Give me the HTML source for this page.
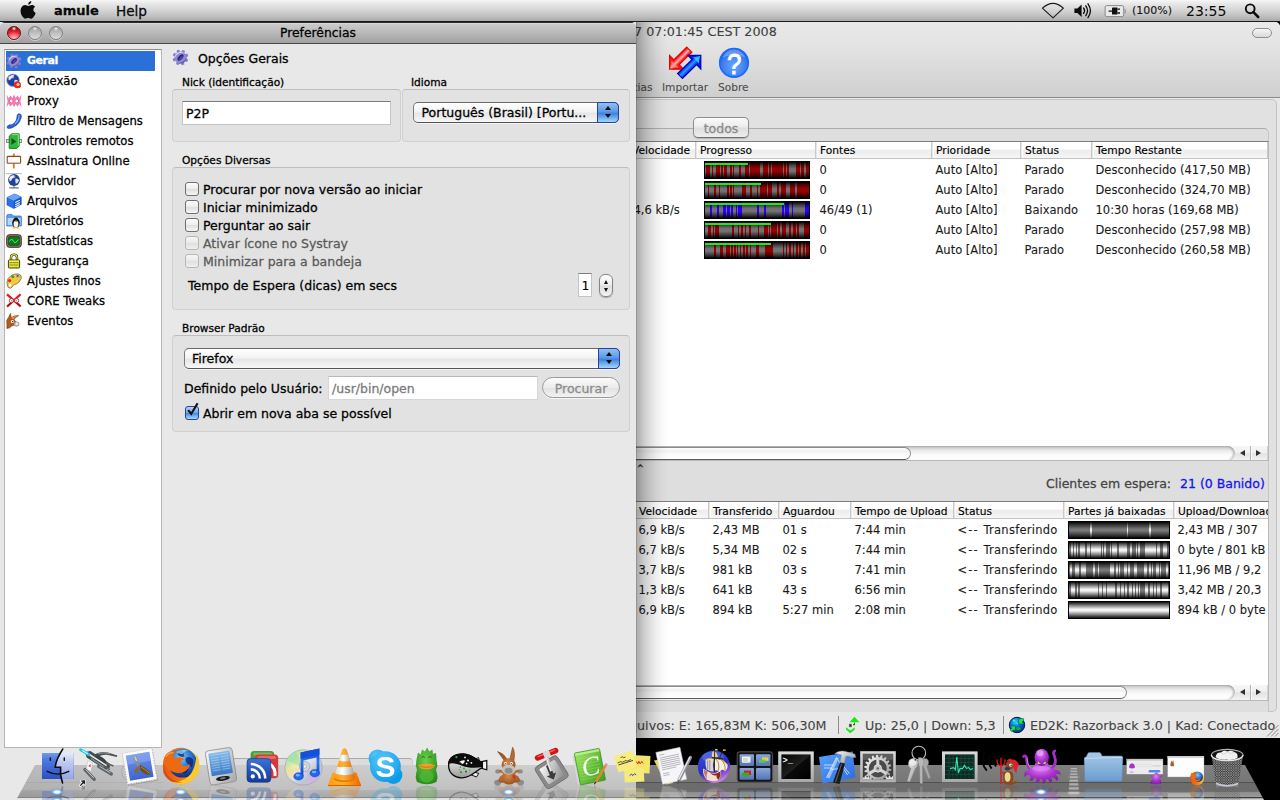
<!DOCTYPE html>
<html lang="pt-BR">
<head>
<meta charset="utf-8">
<title>Preferências</title>
<style>
*{box-sizing:border-box;margin:0;padding:0}
html,body{width:1280px;height:800px;overflow:hidden;background:#000}
body{position:relative;font-family:"DejaVu Sans","Liberation Sans",sans-serif;font-size:12.5px;color:#000;-webkit-font-smoothing:antialiased;-webkit-text-stroke:.28px}
.abs{position:absolute}
.t{position:absolute;white-space:nowrap;line-height:1}
/* ---------- menu bar ---------- */
#menubar{position:absolute;left:0;top:0;width:1280px;height:22px;background:linear-gradient(#f6f6f6 0,#e6e6e6 20%,#d4d4d4 50%,#bdbdbd 80%,#a9a9a9 100%);border-bottom:1px solid #1c1c1c;z-index:50}
/* ---------- main window ---------- */
#main{position:absolute;left:560px;top:22px;width:720px;height:716px;background:#e8e8e8;overflow:hidden;border-radius:0 5px 0 0}
#mtool{position:absolute;left:0;top:0;width:720px;height:76px;background:linear-gradient(#e9e9e9 0,#e4e4e4 30%,#cfcfcf 100%);border-bottom:1px solid #8a8a8a}
/* ---------- preferences window ---------- */
#pref{position:absolute;left:0;top:22px;width:636px;height:778px;background:#e8e8e8;z-index:10}
#ptitle{position:absolute;left:0;top:0;width:636px;height:22px;background:linear-gradient(#2a2a2a 0,#2a2a2a .6px,#e6e6e6 1px,#cbcbcb 2px,#b9b9b9 50%,#a0a0a0 100%);border-bottom:1px solid #484848;border-radius:5px 5px 0 0}
.gb{position:absolute;background:#e2e2e2;border:1px solid #d0d0d0;border-top-color:#bdbdbd;border-radius:4px}
.lbl{font-size:10.6px}
.cb{position:absolute;width:14px;height:14px;border:1px solid #6f6f6f;border-radius:3px;background:linear-gradient(#fdfdfd 0,#ececec 50%,#dedede 51%,#f6f6f6 100%)}
.cb.dis{border-color:#a9a9a9;opacity:.75}
.popup{position:absolute;height:21px;border:1px solid #7b7b7b;border-top-color:#6a6a6a;border-bottom-color:#555;border-radius:5px;background:linear-gradient(#ffffff 0,#f3f3f3 45%,#e6e6e6 55%,#f7f7f7 100%);box-shadow:0 1px 0 rgba(255,255,255,.6)}
.popup .cap{position:absolute;right:-1px;top:-1px;width:22px;height:21px;border:1px solid #2a3e9a;border-radius:0 5px 5px 0;background:linear-gradient(#8fc0f5 0,#5a9be6 45%,#3f83dd 55%,#9fd8fb 100%)}
.tf{position:absolute;background:#fff;border:1px solid #c4c4c4;border-top-color:#7d7d7d}

.f13{font-size:12.5px;line-height:16px;transform:translateY(.5px)}
.lbl{line-height:14px}
.g{color:#5a5a5a}
.tl{position:absolute;top:4px;width:14px;height:14px;border-radius:50%;border:1px solid #808080;background:radial-gradient(circle at 50% 14%,#ededed 0,rgba(237,237,237,0) 22%),linear-gradient(#9a9a9a 0,#bcbcbc 45%,#dcdcdc 100%);box-shadow:0 1px 0 rgba(255,255,255,.45)}
#plist{position:absolute;left:4px;top:27px;width:158px;height:699px;background:#fff;border:1px solid #b5b5b5;border-top-color:#8e8e8e}
.li{position:absolute;left:1px;width:149px;height:20px}
.li span{position:absolute;left:21px;top:2px;font-size:11.6px;line-height:16px;white-space:nowrap}
.li.sel{background:#2b6fd9;color:#fff}
.li.sel span{font-weight:bold;font-size:11px;letter-spacing:-.45px}
.ic{position:absolute;left:0;top:2px;width:16px;height:16px}.ic svg{display:block}
.step{position:absolute;width:14px;height:23px;border:1px solid #858585;border-radius:6px;background:linear-gradient(#fff 0,#ececec 48%,#dcdcdc 52%,#f4f4f4 100%);box-shadow:0 1px 1px rgba(0,0,0,.25)}
.step .up{position:absolute;left:3.5px;top:4.5px;border:2.5px solid transparent;border-top:0;border-bottom:4px solid #111}
.step .dn{position:absolute;left:3.5px;top:12.5px;border:2.5px solid transparent;border-bottom:0;border-top:4px solid #111}
.btn{position:absolute;height:21px;border:1px solid #9a9a9a;border-radius:11px;background:linear-gradient(#fbfbfb 0,#ececec 50%,#e2e2e2 51%,#f2f2f2 100%);box-shadow:0 1px 0 rgba(255,255,255,.7)}
.tf.dis{border-color:#d6d6d6;border-top-color:#b9b9b9}
.cb.on{border-color:#2a3f96;background:linear-gradient(#b9d7f8 0,#6aa6ea 48%,#4489df 52%,#a5dcfb 100%)}
.chk{position:absolute;left:-1px;top:-4px;overflow:visible}
.cap:before{content:"";position:absolute;left:6.5px;top:2.6px;border:3px solid transparent;border-top:0;border-bottom:4.4px solid #0a0a0a}
.cap:after{content:"";position:absolute;left:6.5px;top:10.7px;border:3px solid transparent;border-bottom:0;border-top:4.4px solid #0a0a0a}

#obox{position:absolute;left:-20px;top:77px;width:736.5px;height:613px;background:#e1e1e1;border:1px solid #c2c2c2;border-top-color:#c6c6c6;border-radius:5px}
#obox>*{margin-left:19px;margin-top:-78px}
#tpane{position:absolute;left:-20px;top:105.5px;width:728.5px;height:590px;background:#dedede;border:1px solid #c6c6c6;border-top-color:#adadad;border-radius:5px}
#tabbtn{position:absolute;left:133px;top:95px;width:56px;height:21px;border:1px solid #8e8e8e;border-bottom-color:#6e6e6e;border-radius:5px;background:linear-gradient(#fafafa 0,#ececec 48%,#dedede 52%,#ededed 100%);box-shadow:0 1px 1px rgba(0,0,0,.18)}
.tbl{position:absolute;background:#fff;border:1px solid #b9b9b9;border-top-color:#7e7e7e;overflow:hidden}
.th{position:absolute;left:0;top:0;right:0;height:17px;background:linear-gradient(#fff 0,#fff 40%,#ececec 55%,#f7f7f7 100%);border-bottom:1px solid #c2c2c2}
.h11{font-size:10.7px;line-height:14px;color:#000;-webkit-text-stroke:.12px;margin-left:-1px}
.c12{font-size:11.5px;line-height:16px;color:#1a1a1a;-webkit-text-stroke:.1px;margin-left:-1.5px}
.th2 .h11{margin-top:1px}
.sep{position:absolute;margin-left:-1.5px;top:0;width:2px;height:16px;border-left:1px solid #c9c9c9;border-right:1px solid #fdfdfd;background:#e6e6e6;width:3px}
.pbar,.qbar{position:absolute;width:106px;height:18px;background:#000}
.qbar{width:102px}
#sbar{position:absolute;left:0;top:690px;width:720px;height:26px;background:#e8e8e8}
.sg{color:#444;font-size:12.7px;-webkit-text-stroke:.1px}
.vsep{position:absolute;top:4px;width:1px;height:18px;background:#8e8e8e}

#pshadow{position:absolute;left:636px;top:22px;width:34px;height:778px;z-index:11;background:linear-gradient(90deg,rgba(0,0,0,.5) 0,rgba(0,0,0,.32) 1px,rgba(0,0,0,.2) 8px,rgba(0,0,0,.125) 14px,rgba(0,0,0,.065) 20px,rgba(0,0,0,.025) 26px,rgba(0,0,0,0) 33px)}
.hsb{position:absolute;left:0;width:705.5px;height:15px;background:linear-gradient(#f7f7f7 0,#efefef 45%,#e3e3e3 52%,#f3f3f3 100%);box-shadow:0 1px 0 #fff,1px 0 0 #d2d2d2}
.hsb .track{position:absolute;left:-10px;top:0;height:15px;border-radius:0 7.5px 7.5px 0;background:linear-gradient(#b4b4b4 0,#d2d2d2 12%,#ececec 32%,#fbfbfb 60%,#fff 100%);box-shadow:inset -2px 0 2px rgba(0,0,0,.22)}
.hsb .thumb{position:absolute;top:.5px;height:13.5px;border:1px solid #8a8a8a;border-bottom-color:#5c5c5c;border-radius:7px;background:linear-gradient(#fff 0,#f0f0f0 30%,#fafafa 50%,#fff 100%)}
.hsb .arL{position:absolute;top:4px;border:3.5px solid transparent;border-left:0;border-right:5.5px solid #2e2e2e}
.hsb .arR{position:absolute;top:4px;border:3.5px solid transparent;border-right:0;border-left:5.5px solid #2e2e2e}
.hsb .vs{position:absolute;top:0;width:1px;height:15px;background:#b4b4b4;box-shadow:1px 0 0 #fafafa}
.pbar b,.qbar b{position:absolute;left:1px;top:1px;right:1px;bottom:1px}
.pbar b:after,.qbar b:after{content:"";position:absolute;left:0;top:0;right:0;bottom:0;background:linear-gradient(rgba(0,0,0,.95) 0,rgba(0,0,0,.45) 18%,rgba(0,0,0,0) 42%,rgba(0,0,0,0) 58%,rgba(0,0,0,.5) 82%,rgba(0,0,0,.95) 100%)}
.qbar b:after{background:linear-gradient(rgba(0,0,0,.95) 0,rgba(0,0,0,.55) 18%,rgba(0,0,0,0) 45%,rgba(0,0,0,0) 55%,rgba(0,0,0,.55) 82%,rgba(0,0,0,.95) 100%)}
.pbar u{position:absolute;left:1px;top:2px;height:2px;background:#14f014}
#pb0 b{background:linear-gradient(90deg,#727272 0.0px 1.3px,#960000 1.3px 5.5px,#727272 5.5px 7.2px,#960000 7.2px 8.1px,#727272 8.1px 10.7px,#960000 10.7px 15.0px,#727272 15.0px 16.3px,#960000 16.3px 17.6px,#727272 17.6px 18.9px,#960000 18.9px 22.2px,#727272 22.2px 25.0px,#960000 25.0px 26.7px,#727272 26.7px 27.6px,#960000 27.6px 28.9px,#727272 28.9px 33.9px,#960000 33.9px 35.9px,#727272 35.9px 39.8px,#960000 39.8px 44.1px,#727272 44.1px 45.0px,#960000 45.0px 54.8px,#727272 54.8px 58.0px,#960000 58.0px 63.2px,#727272 63.2px 64.5px,#960000 64.5px 66.2px,#727272 66.2px 67.3px,#960000 67.3px 78.2px,#727272 78.2px 79.5px,#960000 79.5px 80.8px,#727272 80.8px 81.9px,#960000 81.9px 84.1px,#727272 84.1px 91.0px,#960000 91.0px 95.2px,#727272 95.2px 96.5px,#960000 96.5px 99.1px,#727272 99.1px 100.7px,#960000 100.7px 103.7px,#727272 103.7px 104.0px)}#pb0 u{width:42.8px}
#pb1 b{background:linear-gradient(90deg,#727272 0.0px 2.6px,#960000 2.6px 3.9px,#727272 3.9px 9.1px,#960000 9.1px 10.7px,#727272 10.7px 13.7px,#960000 13.7px 15.0px,#727272 15.0px 22.2px,#960000 22.2px 23.7px,#727272 23.7px 25.4px,#960000 25.4px 26.7px,#727272 26.7px 28.0px,#960000 28.0px 28.9px,#727272 28.9px 36.8px,#960000 36.8px 41.1px,#727272 41.1px 45.0px,#960000 45.0px 46.9px,#727272 46.9px 52.2px,#960000 52.2px 53.5px,#727272 53.5px 54.8px,#960000 54.8px 61.9px,#727272 61.9px 63.2px,#960000 63.2px 67.5px,#727272 67.5px 71.7px,#960000 71.7px 73.7px,#727272 73.7px 75.6px,#960000 75.6px 81.5px,#727272 81.5px 85.4px,#960000 85.4px 89.7px,#727272 89.7px 91.9px,#960000 91.9px 103.7px,#727272 103.7px 104.0px)}#pb1 u{width:55.8px}
#pb2 b{background:linear-gradient(90deg,#727272 0.0px 5.0px,#2800ff 5.0px 6.8px,#727272 6.8px 11.7px,#2800ff 11.7px 13.7px,#727272 13.7px 18.0px,#2800ff 18.0px 20.9px,#727272 20.9px 21.9px,#2800ff 21.9px 24.8px,#727272 24.8px 26.1px,#2800ff 26.1px 27.6px,#727272 27.6px 30.6px,#2800ff 30.6px 31.9px,#727272 31.9px 32.9px,#2800ff 32.9px 34.6px,#727272 34.6px 35.5px,#2800ff 35.5px 37.2px,#727272 37.2px 51.9px,#2800ff 51.9px 54.1px,#727272 54.1px 58.9px,#2800ff 58.9px 61.0px,#727272 61.0px 76.9px,#2800ff 76.9px 78.9px,#727272 78.9px 80.2px,#2800ff 80.2px 84.1px,#727272 84.1px 86.7px,#2800ff 86.7px 88.4px,#727272 88.4px 100.1px,#2800ff 100.1px 101.7px,#727272 101.7px 102.3px,#2800ff 102.3px 103.7px,#727272 103.7px 104.0px)}#pb2 u{width:78.9px}
#pb3 b{background:linear-gradient(90deg,#727272 0.0px 2.6px,#960000 2.6px 6.5px,#727272 6.5px 7.8px,#960000 7.8px 9.1px,#727272 9.1px 10.2px,#960000 10.2px 13.7px,#727272 13.7px 27.4px,#960000 27.4px 28.9px,#727272 28.9px 32.6px,#960000 32.6px 33.9px,#727272 33.9px 36.2px,#960000 36.2px 37.8px,#727272 37.8px 39.8px,#960000 39.8px 41.1px,#727272 41.1px 44.3px,#960000 44.3px 45.9px,#727272 45.9px 52.8px,#960000 52.8px 54.1px,#727272 54.1px 59.3px,#960000 59.3px 62.6px,#727272 62.6px 63.6px,#960000 63.6px 65.2px,#727272 65.2px 66.2px,#960000 66.2px 71.7px,#727272 71.7px 73.0px,#960000 73.0px 74.6px,#727272 74.6px 77.2px,#960000 77.2px 81.5px,#727272 81.5px 84.1px,#960000 84.1px 86.0px,#727272 86.0px 87.6px,#960000 87.6px 90.6px,#727272 90.6px 91.9px,#960000 91.9px 93.9px,#727272 93.9px 99.1px,#960000 99.1px 103.7px,#727272 103.7px 104.0px)}#pb3 u{width:65.8px}
#pb4 b{background:linear-gradient(90deg,#727272 0.0px 9.4px,#960000 9.4px 11.1px,#727272 11.1px 15.0px,#960000 15.0px 18.0px,#727272 18.0px 20.9px,#960000 20.9px 24.8px,#727272 24.8px 26.1px,#960000 26.1px 28.0px,#727272 28.0px 29.3px,#960000 29.3px 30.6px,#727272 30.6px 31.9px,#960000 31.9px 33.2px,#727272 33.2px 34.6px,#960000 34.6px 36.2px,#727272 36.2px 37.8px,#960000 37.8px 39.8px,#727272 39.8px 41.1px,#960000 41.1px 42.8px,#727272 42.8px 45.0px,#960000 45.0px 46.3px,#727272 46.3px 51.1px,#960000 51.1px 54.1px,#727272 54.1px 59.7px,#960000 59.7px 67.8px,#727272 67.8px 77.6px,#960000 77.6px 79.3px,#727272 79.3px 80.8px,#960000 80.8px 82.4px,#727272 82.4px 84.1px,#960000 84.1px 86.0px,#727272 86.0px 87.6px,#960000 87.6px 89.3px,#727272 89.3px 91.0px,#960000 91.0px 92.6px,#727272 92.6px 94.1px,#960000 94.1px 95.8px,#727272 95.8px 97.8px,#960000 97.8px 99.7px,#727272 99.7px 101.0px,#960000 101.0px 103.7px,#727272 103.7px 104.0px)}#pb4 u{width:65.8px}
#qb0 b{background:linear-gradient(90deg,#787878 0.0px 20.9px,#f4f4f4 20.9px 23.5px,#787878 23.5px 57.8px,#f4f4f4 57.8px 58.9px,#787878 58.9px 80.2px,#f4f4f4 80.2px 81.9px,#787878 81.9px 100.0px)}
#qb1 b{background:linear-gradient(90deg,#787878 0.0px 2.0px,#f4f4f4 2.0px 3.9px,#787878 3.9px 5.0px,#f4f4f4 5.0px 6.8px,#787878 6.8px 7.6px,#f4f4f4 7.6px 8.9px,#787878 8.9px 10.7px,#f4f4f4 10.7px 15.6px,#787878 15.6px 18.3px,#f4f4f4 18.3px 20.9px,#787878 20.9px 22.2px,#f4f4f4 22.2px 31.9px,#787878 31.9px 32.9px,#f4f4f4 32.9px 33.9px,#787878 33.9px 34.9px,#f4f4f4 34.9px 36.8px,#787878 36.8px 40.7px,#f4f4f4 40.7px 42.0px,#787878 42.0px 43.3px,#f4f4f4 43.3px 48.5px,#787878 48.5px 50.2px,#f4f4f4 50.2px 58.0px,#787878 58.0px 61.5px,#f4f4f4 61.5px 62.8px,#787878 62.8px 66.8px,#f4f4f4 66.8px 68.4px,#787878 68.4px 69.4px,#f4f4f4 69.4px 71.1px,#787878 71.1px 75.9px,#f4f4f4 75.9px 86.7px,#787878 86.7px 88.0px,#f4f4f4 88.0px 91.0px,#787878 91.0px 94.5px,#f4f4f4 94.5px 97.8px,#787878 97.8px 100.0px)}
#qb2 b{background:linear-gradient(90deg,#787878 0.0px 0.7px,#f4f4f4 0.7px 2.6px,#787878 2.6px 6.3px,#f4f4f4 6.3px 10.2px,#787878 10.2px 11.7px,#f4f4f4 11.7px 16.9px,#787878 16.9px 23.7px,#f4f4f4 23.7px 26.1px,#787878 26.1px 28.7px,#f4f4f4 28.7px 30.0px,#787878 30.0px 41.1px,#f4f4f4 41.1px 45.0px,#787878 45.0px 46.9px,#f4f4f4 46.9px 48.9px,#787878 48.9px 49.8px,#f4f4f4 49.8px 51.5px,#787878 51.5px 55.0px,#f4f4f4 55.0px 58.0px,#787878 58.0px 58.9px,#f4f4f4 58.9px 60.6px,#787878 60.6px 65.2px,#f4f4f4 65.2px 68.4px,#787878 68.4px 74.6px,#f4f4f4 74.6px 77.6px,#787878 77.6px 79.8px,#f4f4f4 79.8px 81.9px,#787878 81.9px 82.8px,#f4f4f4 82.8px 84.1px,#787878 84.1px 86.7px,#f4f4f4 86.7px 89.7px,#787878 89.7px 91.0px,#f4f4f4 91.0px 92.3px,#787878 92.3px 97.1px,#f4f4f4 97.1px 99.1px,#787878 99.1px 100.0px)}
#qb3 b{background:linear-gradient(90deg,#787878 0.0px 2.0px,#f4f4f4 2.0px 6.5px,#787878 6.5px 7.6px,#f4f4f4 7.6px 8.9px,#787878 8.9px 10.7px,#f4f4f4 10.7px 28.7px,#787878 28.7px 30.0px,#f4f4f4 30.0px 32.6px,#787878 32.6px 33.9px,#f4f4f4 33.9px 36.8px,#787878 36.8px 38.1px,#f4f4f4 38.1px 45.9px,#787878 45.9px 47.6px,#f4f4f4 47.6px 50.6px,#787878 50.6px 52.2px,#f4f4f4 52.2px 55.0px,#787878 55.0px 56.3px,#f4f4f4 56.3px 58.0px,#787878 58.0px 60.2px,#f4f4f4 60.2px 62.8px,#787878 62.8px 64.1px,#f4f4f4 64.1px 66.2px,#787878 66.2px 67.1px,#f4f4f4 67.1px 68.8px,#787878 68.8px 69.8px,#f4f4f4 69.8px 71.1px,#787878 71.1px 75.9px,#f4f4f4 75.9px 79.5px,#787878 79.5px 81.5px,#f4f4f4 81.5px 84.1px,#787878 84.1px 85.4px,#f4f4f4 85.4px 87.4px,#787878 87.4px 88.4px,#f4f4f4 88.4px 91.0px,#787878 91.0px 93.2px,#f4f4f4 93.2px 99.1px,#787878 99.1px 100.0px)}
#qb4 b{background:linear-gradient(90deg,#f4f4f4 0.0px 100.0px)}
</style>
</head>
<body>

<!-- ================= MAIN WINDOW (behind) ================= -->
<div id="main">
  <div id="mtool">
    <span class="t" style="left:74px;top:2px;font-size:12.75px;line-height:16px;color:#3f3f3f;-webkit-text-stroke:.1px">7 07:01:45 CEST 2008</span>
    <i class="abs" style="left:692px;top:6px;width:20px;height:10px;border:1px solid #8f8f8f;border-radius:5px;background:linear-gradient(#f6f6f6,#d8d8d8)"></i>
    <span class="t lbl" style="right:627.5px;top:58px;color:#4c4c4c;-webkit-text-stroke:.1px">Notícias</span>
    <span class="t lbl" style="left:102px;top:58px;color:#4c4c4c;-webkit-text-stroke:.1px">Importar</span>
    <span class="t lbl" style="left:158px;top:58px;color:#4c4c4c;-webkit-text-stroke:.1px">Sobre</span>
    <svg class="abs" style="left:100px;top:20px" width="50" height="40" viewBox="660 42 50 40">
      <defs><linearGradient id="gr" x1="0" y1="0" x2="1" y2="1"><stop offset="0" stop-color="#f00000"/><stop offset=".42" stop-color="#ff2020"/><stop offset=".5" stop-color="#ffb0b0"/><stop offset=".58" stop-color="#ff2020"/><stop offset="1" stop-color="#f00000"/></linearGradient>
      <linearGradient id="gbl" x1="0" y1="0" x2="1" y2="1"><stop offset="0" stop-color="#0000c8"/><stop offset=".4" stop-color="#0a20f0"/><stop offset=".5" stop-color="#2a9aff"/><stop offset=".6" stop-color="#0a20f0"/><stop offset="1" stop-color="#0000c0"/></linearGradient></defs>
      <path d="M686.8 47.2 L691.8 52.2 L679.2 64.6 L683.4 69.2 L669.6 69.2 L669.6 55.4 L674 59.8 Z" fill="url(#gr)" stroke="#e80000" stroke-width="1.2" stroke-linejoin="miter"/>
      <path d="M671.4 67.4 L671.4 60.4 L678.4 67.4 Z" fill="#ff9a9a" opacity=".7"/>
      <path d="M682.4 78.4 L677.6 73.6 L692 59.6 L688 55.4 L700.8 55.4 L700.8 69 L696.6 64.6 Z" fill="url(#gbl)" stroke="#0000b0" stroke-width="1.2" stroke-linejoin="miter"/>
      <path d="M699 57.2 L693 57.2 L699 63.4 Z" fill="#30c8ff" opacity=".9"/>
    </svg>
    <svg class="abs" style="left:157px;top:24px" width="34" height="34" viewBox="717 46 34 34">
      <defs><radialGradient id="gq" cx=".5" cy=".62" r=".62"><stop offset="0" stop-color="#6aa8ff"/><stop offset=".7" stop-color="#3a7af0"/><stop offset="1" stop-color="#1a56e0"/></radialGradient></defs>
      <circle cx="734" cy="62.8" r="14.3" fill="url(#gq)" stroke="#176aff" stroke-width="1.6"/>
      <path d="M722.6 57.6 A12 12 0 0 1 745.4 57.6 A16 9 0 0 0 722.6 57.6 Z" fill="#fff" opacity=".28"/>
      <text x="0" y="0" transform="translate(734.3 73.5) scale(.9 1)" text-anchor="middle" font-family="Liberation Sans,DejaVu Sans,sans-serif" font-size="28.8" fill="#fff" stroke="#fff" stroke-width=".9">?</text>
    </svg>
  </div>
  <div id="obox">
    <div id="tpane"></div>
    <div id="tabbtn"><span class="t f13" style="left:0;width:54px;text-align:center;top:2px;color:#8a8a8a">todos</span></div>
    <div class="tbl" style="left:0px;top:119px;width:709px;height:320px">
    <div class="th">
    <span class="t h11" style="left:72px;top:2px">Velocidade</span><i class="sep" style="left:135.0px"></i>
    <span class="t h11" style="left:140px;top:2px">Progresso</span><i class="sep" style="left:255.0px"></i>
    <span class="t h11" style="left:260px;top:2px">Fontes</span><i class="sep" style="left:371.5px"></i>
    <span class="t h11" style="left:376px;top:2px">Prioridade</span><i class="sep" style="left:460.0px"></i>
    <span class="t h11" style="left:465px;top:2px">Status</span><i class="sep" style="left:531.0px"></i>
    <span class="t h11" style="left:536px;top:2px">Tempo Restante</span><i class="sep" style="left:707.5px"></i>
    </div>
    <div class="pbar" id="pb0" style="left:143.3px;top:19px"><b></b><u></u></div>
    <span class="t c12" style="left:260px;top:20px">0</span>
    <span class="t c12" style="left:376px;top:20px">Auto [Alto]</span>
    <span class="t c12" style="left:465px;top:20px">Parado</span>
    <span class="t c12" style="left:536px;top:20px">Desconhecido (417,50 MB)</span>
    <div class="pbar" id="pb1" style="left:143.3px;top:39px"><b></b><u></u></div>
    <span class="t c12" style="left:260px;top:40px">0</span>
    <span class="t c12" style="left:376px;top:40px">Auto [Alto]</span>
    <span class="t c12" style="left:465px;top:40px">Parado</span>
    <span class="t c12" style="left:536px;top:40px">Desconhecido (324,70 MB)</span>
    <span class="t c12" style="left:74px;top:60px">4,6 kB/s</span>
    <div class="pbar" id="pb2" style="left:143.3px;top:59px"><b></b><u></u></div>
    <span class="t c12" style="left:260px;top:60px">46/49 (1)</span>
    <span class="t c12" style="left:376px;top:60px">Auto [Alto]</span>
    <span class="t c12" style="left:465px;top:60px">Baixando</span>
    <span class="t c12" style="left:536px;top:60px">10:30 horas (169,68 MB)</span>
    <div class="pbar" id="pb3" style="left:143.3px;top:79px"><b></b><u></u></div>
    <span class="t c12" style="left:260px;top:80px">0</span>
    <span class="t c12" style="left:376px;top:80px">Auto [Alto]</span>
    <span class="t c12" style="left:465px;top:80px">Parado</span>
    <span class="t c12" style="left:536px;top:80px">Desconhecido (257,98 MB)</span>
    <div class="pbar" id="pb4" style="left:143.3px;top:99px"><b></b><u></u></div>
    <span class="t c12" style="left:260px;top:100px">0</span>
    <span class="t c12" style="left:376px;top:100px">Auto [Alto]</span>
    <span class="t c12" style="left:465px;top:100px">Parado</span>
    <span class="t c12" style="left:536px;top:100px">Desconhecido (260,58 MB)</span>
    <div class="hsb" style="top:304px"><div class="track" style="width:683.5px"><i class="thumb" style="left:-10px;width:370px"></i></div><i class="arL" style="left:678.5px"></i><i class="vs" style="left:689px"></i><i class="arR" style="left:695px"></i></div>
    </div>
    <span class="t f13" style="left:486px;top:453px;color:#454545">Clientes em espera:</span>
    <span class="t f13" style="left:620px;top:453px;color:#1414f0">21 (0 Banido)</span>
    <span class="t" style="left:77px;top:442px;font-size:8px;line-height:9px;color:#333;font-weight:bold">^</span>
    <div class="tbl" style="left:0px;top:479px;width:709px;height:200px">
    <div class="th th2">
    <span class="t h11" style="left:79px;top:2px">Velocidade</span><i class="sep" style="left:148.5px"></i>
    <span class="t h11" style="left:153px;top:2px">Transferido</span><i class="sep" style="left:218.5px"></i>
    <span class="t h11" style="left:223px;top:2px">Aguardou</span><i class="sep" style="left:290.0px"></i>
    <span class="t h11" style="left:295px;top:2px">Tempo de Upload</span><i class="sep" style="left:393.0px"></i>
    <span class="t h11" style="left:398px;top:2px">Status</span><i class="sep" style="left:503.5px"></i>
    <span class="t h11" style="left:508px;top:2px">Partes já baixadas</span><i class="sep" style="left:613.5px"></i>
    <span class="t h11" style="left:618px;top:2px">Upload/Download</span><i class="sep" style="left:839.5px"></i>
    </div>
    <span class="t c12" style="left:79px;top:20px">6,9 kB/s</span>
    <span class="t c12" style="left:153px;top:20px">2,43 MB</span>
    <span class="t c12" style="left:223px;top:20px">01 s</span>
    <span class="t c12" style="left:295px;top:20px">7:44 min</span>
    <span class="t c12" style="left:398px;top:20px"><span style="letter-spacing:1.1px">&lt;-- </span><span style="letter-spacing:.25px">Transferindo</span></span>
    <div class="qbar" id="qb0" style="left:507.2px;top:19px"><b></b></div>
    <span class="t c12" style="left:618px;top:20px">2,43 MB / 307</span>
    <span class="t c12" style="left:79px;top:40px">6,7 kB/s</span>
    <span class="t c12" style="left:153px;top:40px">5,34 MB</span>
    <span class="t c12" style="left:223px;top:40px">02 s</span>
    <span class="t c12" style="left:295px;top:40px">7:44 min</span>
    <span class="t c12" style="left:398px;top:40px"><span style="letter-spacing:1.1px">&lt;-- </span><span style="letter-spacing:.25px">Transferindo</span></span>
    <div class="qbar" id="qb1" style="left:507.2px;top:39px"><b></b></div>
    <span class="t c12" style="left:618px;top:40px">0 byte / 801 kB</span>
    <span class="t c12" style="left:79px;top:60px">3,7 kB/s</span>
    <span class="t c12" style="left:153px;top:60px">981 kB</span>
    <span class="t c12" style="left:223px;top:60px">03 s</span>
    <span class="t c12" style="left:295px;top:60px">7:41 min</span>
    <span class="t c12" style="left:398px;top:60px"><span style="letter-spacing:1.1px">&lt;-- </span><span style="letter-spacing:.25px">Transferindo</span></span>
    <div class="qbar" id="qb2" style="left:507.2px;top:59px"><b></b></div>
    <span class="t c12" style="left:618px;top:60px">11,96 MB / 9,2</span>
    <span class="t c12" style="left:79px;top:80px">1,3 kB/s</span>
    <span class="t c12" style="left:153px;top:80px">641 kB</span>
    <span class="t c12" style="left:223px;top:80px">43 s</span>
    <span class="t c12" style="left:295px;top:80px">6:56 min</span>
    <span class="t c12" style="left:398px;top:80px"><span style="letter-spacing:1.1px">&lt;-- </span><span style="letter-spacing:.25px">Transferindo</span></span>
    <div class="qbar" id="qb3" style="left:507.2px;top:79px"><b></b></div>
    <span class="t c12" style="left:618px;top:80px">3,42 MB / 20,3</span>
    <span class="t c12" style="left:79px;top:100px">6,9 kB/s</span>
    <span class="t c12" style="left:153px;top:100px">894 kB</span>
    <span class="t c12" style="left:223px;top:100px">5:27 min</span>
    <span class="t c12" style="left:295px;top:100px">2:08 min</span>
    <span class="t c12" style="left:398px;top:100px"><span style="letter-spacing:1.1px">&lt;-- </span><span style="letter-spacing:.25px">Transferindo</span></span>
    <div class="qbar" id="qb4" style="left:507.2px;top:99px"><b></b></div>
    <span class="t c12" style="left:618px;top:100px">894 kB / 0 byte</span>
    <div class="hsb" style="top:183px"><div class="track" style="width:683.5px"><i class="thumb" style="left:-10px;width:586px"></i></div><i class="arL" style="left:678.5px"></i><i class="vs" style="left:689px"></i><i class="arR" style="left:695px"></i></div>
    </div>
  </div>
  <div id="sbar">
    <span class="t f13 sg" style="right:453.5px;top:5px">Arquivos: E: 165,83M K: 506,30M</span>
    <i class="vsep" style="left:278px"></i>
    <svg class="abs" style="left:284px;top:3px" width="18" height="20" viewBox="844 715 18 20"><path d="M854.5 716.8 L859.4 722.2 L849.6 722.2 Z" fill="#0af20a"/><path d="M846 727.2 L850.4 730.4 L854.8 727.2 L854.8 729.6 L850.4 733.2 L846 729.6 Z" fill="#0af20a"/><path d="M849.4 724.2 h2 v2.6 h-2 Z M853 725 h1.6 v-2.4" fill="#333" stroke="#333" stroke-width=".5"/></svg>
    <span class="t f13 sg" style="left:305px;top:5px">Up: 25,0 | Down: 5,3</span>
    <i class="vsep" style="left:443px"></i>
    <svg class="abs" style="left:448px;top:2px" width="18" height="20" viewBox="1008 714 18 20"><defs><radialGradient id="gglobe" cx=".4" cy=".3" r=".75"><stop offset="0" stop-color="#20d8f8"/><stop offset=".5" stop-color="#0a64d8"/><stop offset="1" stop-color="#062a8a"/></radialGradient></defs><circle cx="1017" cy="725" r="7.7" fill="url(#gglobe)" stroke="#06184e" stroke-width="1"/><path d="M1018.8 718.6 L1023.6 718.6 L1023.6 720.4 L1022 722 L1024 724 L1018.8 724 Z" fill="#14f02a" stroke="#0a3a6a" stroke-width=".5" transform="rotate(0)"/><path d="M1010.2 726 L1015.2 726 L1015.2 731.4 L1013.4 729.8 L1011.6 731.6 L1010.2 730 L1011.8 728.2 Z" fill="#14f02a" stroke="#0a3a6a" stroke-width=".5"/><ellipse cx="1018.4" cy="728.6" rx="2.4" ry="1.6" fill="#10b020"/><circle cx="1014" cy="720.4" r=".9" fill="#8af8c0"/><circle cx="1017.2" cy="723.6" r=".7" fill="#8af880"/></svg>
    <span class="t f13 sg" style="left:470px;top:5px">ED2K: Razorback 3.0 | Kad: Conectado</span>
    <svg class="abs" style="right:1px;bottom:1px" width="13" height="13" viewBox="0 0 13 13"><path d="M12.5 1 L1 12.5 M12.5 5 L5 12.5 M12.5 9 L9 12.5" stroke="#8a8a8a" stroke-width="1"/></svg>
  </div>
</div>

<!-- ================= PREFERENCES WINDOW ================= -->
<div id="pref">
  <div id="ptitle">
    <i class="tl" style="left:7px;background:radial-gradient(circle at 50% 12%,#fff 0,rgba(255,255,255,0) 20%),radial-gradient(circle at 50% 105%,#ffd0d0 0,rgba(255,150,150,0) 60%),linear-gradient(#8c0a12 0,#e31c28 42%,#f2424c 100%);border-color:#70101a"></i>
    <i class="tl" style="left:28px"></i>
    <i class="tl" style="left:49px"></i>
    <span class="t" style="left:0;width:636px;text-align:center;top:3px;font-size:12.35px;line-height:16px">Preferências</span>
  </div>
  <div id="plist">
    <div class="li sel" style="top:1px"><i class="ic"><svg width="16" height="16" viewBox="0 0 16 16"><g transform="rotate(-20 8 8)"><g fill="#857ecb"><rect x="6.6" y="0.6" width="2.8" height="3.2" rx=".5" transform="rotate(0 8 8)"/><rect x="6.6" y="0.6" width="2.8" height="3.2" rx=".5" transform="rotate(45 8 8)"/><rect x="6.6" y="0.6" width="2.8" height="3.2" rx=".5" transform="rotate(90 8 8)"/><rect x="6.6" y="0.6" width="2.8" height="3.2" rx=".5" transform="rotate(135 8 8)"/><rect x="6.6" y="0.6" width="2.8" height="3.2" rx=".5" transform="rotate(180 8 8)"/><rect x="6.6" y="0.6" width="2.8" height="3.2" rx=".5" transform="rotate(225 8 8)"/><rect x="6.6" y="0.6" width="2.8" height="3.2" rx=".5" transform="rotate(270 8 8)"/><rect x="6.6" y="0.6" width="2.8" height="3.2" rx=".5" transform="rotate(315 8 8)"/></g><circle cx="8" cy="8" r="5.7" fill="#8f88d2"/><path d="M3 6.4 A5.4 5.4 0 0 1 12.6 5.2 A7 7 0 0 0 3 6.4 Z" fill="#e4e1fa" opacity=".9"/><path d="M13.4 9.4 A5.6 5.6 0 0 1 4 12 A7.4 7.4 0 0 0 13.4 9.4 Z" fill="#4a4296" opacity=".75"/><ellipse cx="8" cy="8" rx="3.5" ry="1.9" transform="rotate(-25 8 8)" fill="#2a2370"/><ellipse cx="8" cy="8.5" rx="2.6" ry="1.1" transform="rotate(-25 8 8)" fill="#4a44a0"/></g></svg></i><span>Geral</span></div>
    <div class="li" style="top:21px"><i class="ic"><svg width="16" height="16" viewBox="0 0 16 16"><circle cx="7" cy="7.2" r="6.3" fill="#1d3f9e" stroke="#9aa6cc" stroke-width=".7"/><path d="M2.4 4.6 Q5 1.8 8.6 1.6 Q7.6 4.4 5.2 5.4 Q4.2 7.6 2.6 7.2 Z M8.6 7 Q11 6.4 12.2 8.2 Q11 11 8.6 11.6 Q8 9 8.6 7 Z" fill="#d4dcf2"/><ellipse cx="5.4" cy="4" rx="3" ry="1.6" fill="#fff" opacity=".45"/><circle cx="11.4" cy="11.8" r="3.5" fill="#e8281a"/><circle cx="12" cy="11.4" r="1.5" fill="#ffd8b0"/><circle cx="13.6" cy="13.4" r="1.1" fill="#e8281a"/></svg></i><span>Conexão</span></div>
    <div class="li" style="top:41px"><i class="ic"><svg width="16" height="16" viewBox="0 0 16 16"><path d="M0.4 1.6 L2.6 5 L4.6 2.6 L6.4 5 L8 1.4 L9.6 5 L11.4 2.6 L13.4 5 L15.6 1.6 L14.4 8 L15.6 14.4 L13.4 11 L11.4 13.4 L9.6 11 L8 14.6 L6.4 11 L4.6 13.4 L2.6 11 L0.4 14.4 L1.6 8 Z" fill="#f47ab0"/><path d="M3 8 L5.2 5.8 L7.4 8 L5.2 10.2 Z M8.6 8 L10.8 5.8 L13 8 L10.8 10.2 Z" fill="#fff" stroke="#e04890" stroke-width=".7"/></svg></i><span>Proxy</span></div>
    <div class="li" style="top:61px"><i class="ic"><svg width="16" height="16" viewBox="0 0 16 16"><path d="M12.6 0.8 Q15.6 0.6 15.4 3.4 Q14.6 9.6 8.6 13.6 Q5 15.8 2 15.4 Q0.6 14.8 1.2 13.2 L3.4 11.8 Q5.6 12.4 8.2 10.2 Q11.2 7.4 11 3.6 Q10.8 1.2 12.6 0.8 Z" fill="#2c62d6" stroke="#173a96" stroke-width=".6"/><path d="M13 2 Q13.6 6.6 9 10.8" stroke="#86b2f6" stroke-width="1.1" fill="none"/></svg></i><span>Filtro de Mensagens</span></div>
    <div class="li" style="top:81px"><i class="ic"><svg width="16" height="16" viewBox="0 0 16 16"><rect x="0.2" y="6.4" width="3.4" height="3.2" fill="#d8d8d8" stroke="#555" stroke-width=".6"/><rect x="12.4" y="6.4" width="3.4" height="3.2" fill="#d8d8d8" stroke="#555" stroke-width=".6"/><path d="M3.2 3.2 L5.6 0.8 L13.2 0.8 L13.2 13 L10.8 15.4 L3.2 15.4 Z" fill="#2fb83a" stroke="#0f6a18" stroke-width=".8"/><path d="M5.8 1.6 L12.4 1.6 L12.4 12.6" stroke="#8fe496" stroke-width=".9" fill="none"/><path d="M5.4 5 L10.4 8.4 L5.4 11.8 Z" fill="#0c5a14"/></svg></i><span>Controles remotos</span></div>
    <div class="li" style="top:101px"><i class="ic"><svg width="16" height="16" viewBox="0 0 16 16"><rect x="6.9" y="0.8" width="1.8" height="14.6" fill="#e07a1c"/><path d="M7.8 0.2 L9 1.6 L6.6 1.6 Z" fill="#e07a1c"/><rect x="1.2" y="3.4" width="13.4" height="6.8" rx=".8" fill="#fbfbfb" stroke="#8a4a16" stroke-width="1.1"/><path d="M2 9.6 H14" stroke="#c9c9c9" stroke-width=".7"/></svg></i><span>Assinatura Online</span></div>
    <div class="li" style="top:121px"><i class="ic"><svg width="16" height="16" viewBox="0 0 16 16"><path d="M0.4 0.6 H15.6" stroke="#555" stroke-width=".8" stroke-dasharray="1 1"/><circle cx="8" cy="7" r="5.9" fill="#20409e"/><path d="M3 5 Q5 2.4 8.4 2 Q8.6 4.6 6.2 5.8 Q5.6 8.4 3.6 8.2 Z M9.4 5.6 Q12 5 13 7.4 Q12 10 9.8 10.8 Q9 8 9.4 5.6 Z" fill="#dfe5f6"/><ellipse cx="6.4" cy="3.8" rx="3" ry="1.5" fill="#fff" opacity=".5"/><path d="M8 12.8 V14.6 M3.4 14.9 H12.6" stroke="#6a6a6a" stroke-width="1.1"/></svg></i><span>Servidor</span></div>
    <div class="li" style="top:141px"><i class="ic"><svg width="16" height="16" viewBox="0 0 16 16"><path d="M1 4.6 L8.6 1 L15.2 4 L15.2 11.4 L7.8 15.4 L1 12 Z" fill="#2a70e8" stroke="#1248b0" stroke-width=".6"/><path d="M1 4.6 L8.6 1 L15.2 4 L7.8 7.8 Z" fill="#6aa6f8"/><path d="M7.8 7.8 L15.2 4 L15.2 11.4 L7.8 15.4 Z" fill="#1a56c8"/><path d="M9.2 9.6 L13.8 7.2 M9.2 11.8 L13.8 9.4 M9.2 13.8 L13.8 11.4" stroke="#e8f0ff" stroke-width="1.1"/></svg></i><span>Arquivos</span></div>
    <div class="li" style="top:161px"><i class="ic"><svg width="16" height="16" viewBox="0 0 16 16"><path d="M0.8 3 Q0.8 1.4 2.2 1.4 L6 1.4 L7.4 3 L14.4 3 Q15.4 3 15.4 4.2 L15.4 13 L0.8 13 Z" fill="#5a9cf0" stroke="#2a68c8" stroke-width=".7"/><path d="M1.6 5 H14.6 V12.2 H1.6 Z" fill="#b4d4fa"/><ellipse cx="10" cy="9.8" rx="3.8" ry="4.8" fill="#141414"/><ellipse cx="10" cy="11" rx="2.4" ry="3.2" fill="#f4f4f4"/><circle cx="10" cy="6.6" r="2" fill="#141414"/><path d="M9 7.4 L11 7.4 L10 8.6 Z" fill="#f0b818"/><ellipse cx="8" cy="15" rx="1.7" ry=".8" fill="#f0c818"/><ellipse cx="12" cy="15" rx="1.7" ry=".8" fill="#f0c818"/></svg></i><span>Diretórios</span></div>
    <div class="li" style="top:181px"><i class="ic"><svg width="16" height="16" viewBox="0 0 16 16"><rect x="0.6" y="1.6" width="14.8" height="12.8" rx="3" fill="#8a6a5a" stroke="#3a2a22" stroke-width=".8"/><rect x="2.6" y="3.6" width="10.8" height="8.6" rx="1.4" fill="#0c7a20" stroke="#053c0e" stroke-width=".6"/><path d="M3.2 8.6 L5.6 6 L9.2 10 L12.6 6.6" stroke="#5af06a" stroke-width="1" fill="none"/></svg></i><span>Estatísticas</span></div>
    <div class="li" style="top:201px"><i class="ic"><svg width="16" height="16" viewBox="0 0 16 16"><path d="M5 7.4 V4.6 Q5 1.6 8 1.6 Q11 1.6 11 4.6 V7.4" fill="none" stroke="#2a2a10" stroke-width="2.4"/><path d="M5 7.4 V4.6 Q5 1.6 8 1.6 Q11 1.6 11 4.6 V7.4" fill="none" stroke="#e8e838" stroke-width="1.1"/><rect x="2.4" y="7" width="11.2" height="8" rx=".8" fill="#e4e428" stroke="#2a2a10" stroke-width=".9"/><path d="M3.4 9.6 H12.6 M3.4 12 H12.6" stroke="#8a8a14" stroke-width=".9"/><path d="M3.2 8 H12.8" stroke="#fbfb9a" stroke-width=".8"/></svg></i><span>Segurança</span></div>
    <div class="li" style="top:221px"><i class="ic"><svg width="16" height="16" viewBox="0 0 16 16"><path d="M1 10.6 Q0.6 5 6 2.2 Q12 -0.6 15 2.6 Q16.4 5.6 13 9 Q11 11 8.4 11.6 Q6.4 12.2 6.2 14 Q4.6 16 2.4 14.6 Q1.2 13 1 10.6 Z" fill="#f4c93a" stroke="#7a6a4a" stroke-width=".8"/><circle cx="3.6" cy="7.6" r="1.6" fill="#e82020"/><circle cx="6.8" cy="3.8" r="1.5" fill="#2aa82a"/><path d="M10.6 1.6 L13.6 3 L10.6 4.6 Z" fill="#2a5af0"/><ellipse cx="4.2" cy="12.2" rx="1.2" ry="1.6" fill="#fff"/></svg></i><span>Ajustes finos</span></div>
    <div class="li" style="top:241px"><i class="ic"><svg width="16" height="16" viewBox="0 0 16 16"><path d="M1 1.4 L14.6 13.4 M14.6 1.2 L1 13.6" stroke="#e8141c" stroke-width="2.2"/><path d="M10 9.4 L14.4 13.2 M6 9.4 L1.6 13.4" stroke="#1a1a1a" stroke-width="1" opacity=".7"/><circle cx="5.4" cy="7.6" r="2.1" fill="#fff" stroke="#c01018" stroke-width=".8"/><circle cx="10.6" cy="7.6" r="2.1" fill="#fff" stroke="#c01018" stroke-width=".8"/><circle cx="5.8" cy="7.8" r=".8" fill="#3aa8c8"/><circle cx="10.2" cy="7.8" r=".8" fill="#3aa8c8"/></svg></i><span>CORE Tweaks</span></div>
    <div class="li" style="top:261px"><i class="ic"><svg width="16" height="16" viewBox="0 0 16 16"><path d="M4.6 0.4 L5.2 4.6 Q7.6 2.4 12.8 2.6 Q9.8 3.8 8.2 6.4 Q9.8 8 9.6 10.4 Q8 12.6 5.8 13 Q3.8 15.6 0.8 15.4 Q1.2 11 0.6 8 Q1.4 5.6 2.6 4.6 Q3.2 1.8 4.6 0.4 Z" fill="#b45a1e" stroke="#6a3008" stroke-width=".5"/><path d="M5.2 4.8 Q7.6 3 11 3 Q8.2 4.4 7.4 6.4 Z" fill="#e09a58"/><circle cx="6.4" cy="8.4" r="1.5" fill="#fff"/><circle cx="6.7" cy="8.6" r=".7" fill="#111"/><ellipse cx="10.4" cy="11" rx="2.6" ry="2.2" fill="#c8c8c8" stroke="#555" stroke-width=".5"/><ellipse cx="11" cy="10.8" rx="1" ry="1.2" fill="#f4f4f4"/></svg></i><span>Eventos</span></div>
  </div>
  <!-- heading -->
  <svg class="abs" style="left:172px;top:27px" width="17" height="17" viewBox="0 0 16 16"><g transform="rotate(-20 8 8)"><g fill="#857ecb"><rect x="6.6" y="0.6" width="2.8" height="3.2" rx=".5" transform="rotate(0 8 8)"/><rect x="6.6" y="0.6" width="2.8" height="3.2" rx=".5" transform="rotate(45 8 8)"/><rect x="6.6" y="0.6" width="2.8" height="3.2" rx=".5" transform="rotate(90 8 8)"/><rect x="6.6" y="0.6" width="2.8" height="3.2" rx=".5" transform="rotate(135 8 8)"/><rect x="6.6" y="0.6" width="2.8" height="3.2" rx=".5" transform="rotate(180 8 8)"/><rect x="6.6" y="0.6" width="2.8" height="3.2" rx=".5" transform="rotate(225 8 8)"/><rect x="6.6" y="0.6" width="2.8" height="3.2" rx=".5" transform="rotate(270 8 8)"/><rect x="6.6" y="0.6" width="2.8" height="3.2" rx=".5" transform="rotate(315 8 8)"/></g><circle cx="8" cy="8" r="5.7" fill="#8f88d2"/><path d="M3 6.4 A5.4 5.4 0 0 1 12.6 5.2 A7 7 0 0 0 3 6.4 Z" fill="#e4e1fa" opacity=".9"/><path d="M13.4 9.4 A5.6 5.6 0 0 1 4 12 A7.4 7.4 0 0 0 13.4 9.4 Z" fill="#4a4296" opacity=".75"/><ellipse cx="8" cy="8" rx="3.5" ry="1.9" transform="rotate(-25 8 8)" fill="#2a2370"/><ellipse cx="8" cy="8.5" rx="2.6" ry="1.1" transform="rotate(-25 8 8)" fill="#4a44a0"/></g></svg>
  <span class="t f13" style="left:198px;top:28px">Opções Gerais</span>

  <span class="t lbl" style="left:182px;top:53px">Nick (identificação)</span>
  <div class="gb" style="left:172px;top:67px;width:229px;height:53px"></div>
  <div class="tf" style="left:182px;top:79px;width:209px;height:24px"><span class="t f13" style="left:3px;top:3px">P2P</span></div>

  <span class="t lbl" style="left:411px;top:53px">Idioma</span>
  <div class="gb" style="left:402px;top:67px;width:228px;height:53px"></div>
  <div class="popup" style="left:413px;top:80px;width:206px"><span class="t f13" style="left:7.5px;top:1px">Português (Brasil) [Portu...</span><b class="cap"></b></div>

  <span class="t lbl" style="left:182px;top:131px">Opções Diversas</span>
  <div class="gb" style="left:172px;top:145px;width:458px;height:143px"></div>
  <i class="cb" style="left:185px;top:160px"></i><span class="t f13" style="left:203px;top:159px">Procurar por nova versão ao iniciar</span>
  <i class="cb" style="left:185px;top:178px"></i><span class="t f13" style="left:203px;top:177px">Iniciar minimizado</span>
  <i class="cb" style="left:185px;top:196px"></i><span class="t f13" style="left:203px;top:195px">Perguntar ao sair</span>
  <i class="cb dis" style="left:185px;top:214px"></i><span class="t f13 g" style="left:203px;top:213px">Ativar ícone no Systray</span>
  <i class="cb dis" style="left:185px;top:232px"></i><span class="t f13 g" style="left:203px;top:231px">Minimizar para a bandeja</span>
  <span class="t f13" style="left:188px;top:255px">Tempo de Espera (dicas) em secs</span>
  <div class="tf" style="left:578px;top:251px;width:14px;height:24px"><span class="t f13" style="left:2.5px;top:3px;-webkit-text-stroke:.1px">1</span></div>
  <div class="step" style="left:599px;top:252px"><i class="up"></i><i class="dn"></i></div>

  <span class="t lbl" style="left:182px;top:299px">Browser Padrão</span>
  <div class="gb" style="left:172px;top:313px;width:458px;height:97px"></div>
  <div class="popup" style="left:184px;top:326px;width:436px"><span class="t f13" style="left:7px;top:1px">Firefox</span><b class="cap"></b></div>
  <span class="t f13" style="left:184px;top:358px">Definido pelo Usuário:</span>
  <div class="tf dis" style="left:328px;top:354px;width:210px;height:24px"><span class="t f13" style="left:3px;top:3px;color:#7a7a7a">/usr/bin/open</span></div>
  <div class="btn" style="left:542px;top:355px;width:78px"><span class="t f13" style="left:0;width:76px;text-align:center;top:1.5px;color:#8c8c8c">Procurar</span></div>
  <i class="cb on" style="left:185px;top:384px"><svg class="chk" width="16" height="16" viewBox="0 0 16 16"><path d="M3.2 7.2 L6.2 11 L12.6 0.2" fill="none" stroke="#111" stroke-width="2.1"/></svg></i><span class="t f13" style="left:203px;top:383px">Abrir em nova aba se possível</span>
  <div class="abs" style="left:232px;top:736px;width:181px;height:14px;border:1px solid #c9c9c9;border-top-color:#a9a9a9;border-radius:4px;background:#dcdcdc"></div>
</div>

<div id="pshadow"></div>

<!-- ================= MENU BAR ================= -->
<div id="menubar">
  <svg class="abs" style="left:19px;top:0" width="18" height="21" viewBox="0 0 18 21"><path d="M12.3 1 C12.5 2.6 11.2 4.6 9.2 4.8 C8.9 3.2 10.4 1.2 12.3 1 Z M9.3 5.9 C10.3 5.9 11.3 5 12.8 5 C14 5 15.3 5.6 16.1 6.8 C13.6 8.3 14 11.9 16.7 12.9 C16.2 14.4 15.4 15.8 14.5 16.9 C13.7 17.9 12.9 18.7 11.8 18.7 C10.7 18.7 10.3 18 9.1 18 C7.8 18 7.3 18.7 6.3 18.7 C5.2 18.7 4.4 17.8 3.5 16.6 C1.6 14 0.8 9.8 2.6 7.2 C3.5 5.9 4.9 5.1 6.2 5.1 C7.5 5.1 8.3 5.9 9.3 5.9 Z" fill="#0c0c0c"/></svg>
  <span class="t" style="left:54px;top:3px;font-size:13px;line-height:16px;font-weight:bold;color:#0a0a0a">amule</span>
  <span class="t" style="left:116px;top:3px;font-size:13.6px;line-height:16px;color:#0a0a0a">Help</span>
  <svg class="abs" style="left:1040px;top:0" width="240" height="21" viewBox="1040 0 240 21">
    <path d="M1042.4 8.2 Q1053 -1.6 1063.4 8.2 L1053 17.8 Z" fill="none" stroke="#1a1a1a" stroke-width="1.1" stroke-linejoin="round"/>
    <path d="M1074.4 8.4 L1077.4 8.4 L1081.6 4.4 L1081.6 17 L1077.4 13 L1074.4 13 Z" fill="#0c0c0c"/>
    <path d="M1083.6 8 Q1085.6 10.7 1083.6 13.4 M1085.8 5.8 Q1089.2 10.7 1085.8 15.6 M1088 3.8 Q1092.8 10.7 1088 17.6" fill="none" stroke="#0c0c0c" stroke-width="1.3" stroke-linecap="round"/>
    <rect x="1105.1" y="5.6" width="18.6" height="11" rx="1.6" fill="#e9e9e9" stroke="#8a8a8a" stroke-width="1"/>
    <path d="M1124.6 8.8 Q1126.4 11 1124.6 13.4" fill="none" stroke="#9a9a9a" stroke-width="1.1"/>
    <path d="M1108.6 11.1 H1112 M1117.4 9.2 H1120 M1117.4 13 H1120" stroke="#111" stroke-width="1.3"/>
    <path d="M1112 8 Q1112 7.6 1112.6 7.6 L1117.4 7.6 L1117.4 14.6 L1112.6 14.6 Q1112 14.6 1112 14.2 Z" fill="#111"/>
    <circle cx="1250.2" cy="8.8" r="4.4" fill="none" stroke="#0c0c0c" stroke-width="1.9"/>
    <path d="M1253.4 12.2 L1258.2 17" stroke="#0c0c0c" stroke-width="2.5" stroke-linecap="round"/>
  </svg>
  <span class="t" style="left:1132px;top:4px;font-size:11px;line-height:14px;color:#141414;-webkit-text-stroke:.1px">(100%)</span>
  <span class="t" style="left:1186px;top:3px;font-size:14px;line-height:16px;color:#0a0a0a;-webkit-text-stroke:0">23:55</span>
</div>

<!-- ================= DOCK ================= -->
<!--DOCK--><svg id="docksvg" width="1280" height="60" viewBox="0 740 1280 60" style="position:absolute;left:0;top:740px;z-index:40;overflow:hidden">
<defs>
 <linearGradient id="sh1" x1="0" y1="0" x2="0" y2="1"><stop offset="0" stop-color="#c2c2c2" stop-opacity=".64"/><stop offset="1" stop-color="#aeaeae" stop-opacity=".69"/></linearGradient>
 <linearGradient id="fdL" x1="0" y1="0" x2="0" y2="1"><stop offset="0" stop-color="#6f9bf0"/><stop offset=".25" stop-color="#4d7ae2"/><stop offset="1" stop-color="#2d50c4"/></linearGradient>
 <linearGradient id="fdR" x1="0" y1="0" x2="0" y2="1"><stop offset="0" stop-color="#e6ebfb"/><stop offset=".3" stop-color="#c3cdf3"/><stop offset="1" stop-color="#94a6e6"/></linearGradient>
 <radialGradient id="glow"><stop offset="0" stop-color="#fff"/><stop offset=".3" stop-color="#eef8ff"/><stop offset=".55" stop-color="#86c6ff" stop-opacity=".85"/><stop offset=".8" stop-color="#4a9aff" stop-opacity=".35"/><stop offset="1" stop-color="#2a7aff" stop-opacity="0"/></radialGradient>
 <linearGradient id="stampB" x1="0" y1="0" x2="0" y2="1"><stop offset="0" stop-color="#6f93ea"/><stop offset="1" stop-color="#3f63d2"/></linearGradient>
 <radialGradient id="ffGlobe" cx=".45" cy=".3" r=".75"><stop offset="0" stop-color="#7fd0f8"/><stop offset=".45" stop-color="#2a78d8"/><stop offset="1" stop-color="#10206a"/></radialGradient>
 <linearGradient id="ffFox" x1="0" y1="0" x2="1" y2="0"><stop offset="0" stop-color="#e8540e"/><stop offset=".55" stop-color="#f47a14"/><stop offset="1" stop-color="#fbd028"/></linearGradient>
 <linearGradient id="pdaB" x1="0" y1="0" x2="1" y2="1"><stop offset="0" stop-color="#fafafa"/><stop offset="1" stop-color="#a8a8a8"/></linearGradient>
 <linearGradient id="pdaS" x1="0" y1="0" x2="0" y2="1"><stop offset="0" stop-color="#86bdec"/><stop offset="1" stop-color="#3878c4"/></linearGradient>
 <linearGradient id="rssB" x1="0" y1="0" x2="0" y2="1"><stop offset="0" stop-color="#3a74d8"/><stop offset="1" stop-color="#143c9a"/></linearGradient>
 <linearGradient id="cd" x1="0" y1="0" x2="1" y2="1"><stop offset="0" stop-color="#f4f4f8"/><stop offset=".22" stop-color="#b8e8b0"/><stop offset=".34" stop-color="#f0e8a0"/><stop offset=".46" stop-color="#e8e8f0"/><stop offset=".7" stop-color="#c0c4d0"/><stop offset=".85" stop-color="#d0b8e8"/><stop offset="1" stop-color="#f0f0f4"/></linearGradient>
 <linearGradient id="note" x1="0" y1="0" x2="0" y2="1"><stop offset="0" stop-color="#0a3ccc"/><stop offset=".5" stop-color="#2a78f0"/><stop offset="1" stop-color="#0a48d0"/></linearGradient>
 <linearGradient id="vlcO" x1="0" y1="0" x2="1" y2="0"><stop offset="0" stop-color="#ff9a10"/><stop offset=".45" stop-color="#ffb030"/><stop offset="1" stop-color="#e86a00"/></linearGradient>
 <linearGradient id="vlcW" x1="0" y1="0" x2="1" y2="0"><stop offset="0" stop-color="#d8d8d8"/><stop offset=".4" stop-color="#ffffff"/><stop offset="1" stop-color="#a8a8a8"/></linearGradient>
 <radialGradient id="sky" cx=".4" cy=".3" r=".8"><stop offset="0" stop-color="#5ac8fa"/><stop offset="1" stop-color="#0a98e8"/></radialGradient>
 <radialGradient id="duck" cx=".45" cy=".35" r=".7"><stop offset="0" stop-color="#6ad048"/><stop offset="1" stop-color="#2a8a1a"/></radialGradient>
 <linearGradient id="fishB" x1="0" y1="0" x2="0" y2="1"><stop offset="0" stop-color="#fff"/><stop offset="1" stop-color="#9a9a9a"/></linearGradient>
 <radialGradient id="mule" cx=".45" cy=".35" r=".8"><stop offset="0" stop-color="#d88a48"/><stop offset="1" stop-color="#8a4618"/></radialGradient>
 <linearGradient id="trB" x1="0" y1="0" x2="1" y2="1"><stop offset="0" stop-color="#fdfdfd"/><stop offset="1" stop-color="#8c8c8c"/></linearGradient>
 <linearGradient id="nbG" x1="0" y1="0" x2="1" y2="1"><stop offset="0" stop-color="#9ae858"/><stop offset="1" stop-color="#3e9e22"/></linearGradient>
 <linearGradient id="shipG" x1=".3" y1="0" x2=".75" y2="1"><stop offset="0" stop-color="#3450e0"/><stop offset=".5" stop-color="#2a30bc"/><stop offset=".8" stop-color="#9a58d4"/><stop offset="1" stop-color="#e0a0f0"/></linearGradient>
 <linearGradient id="spP" x1="0" y1="0" x2="0" y2="1"><stop offset="0" stop-color="#8aa8dc"/><stop offset="1" stop-color="#5474b4"/></linearGradient>
 <linearGradient id="frame" x1="0" y1="0" x2="0" y2="1"><stop offset="0" stop-color="#dcdcdc"/><stop offset="1" stop-color="#a8a8a8"/></linearGradient>
 <linearGradient id="term" x1="0" y1="0" x2="1" y2="1"><stop offset="0" stop-color="#050505"/><stop offset=".5" stop-color="#1e1e1e"/><stop offset=".52" stop-color="#0a0a0a"/><stop offset="1" stop-color="#000"/></linearGradient>
 <linearGradient id="xcB" x1="0" y1="0" x2="1" y2="1"><stop offset="0" stop-color="#5aa2fa"/><stop offset="1" stop-color="#2a6ae0"/></linearGradient>
 <linearGradient id="silver" x1="0" y1="0" x2="1" y2="1"><stop offset="0" stop-color="#fafafa"/><stop offset=".5" stop-color="#c4c4c4"/><stop offset="1" stop-color="#8a8a8a"/></linearGradient>
 <radialGradient id="octo" cx=".45" cy=".3" r=".8"><stop offset="0" stop-color="#e080f8"/><stop offset=".5" stop-color="#a832cc"/><stop offset="1" stop-color="#6a1490"/></radialGradient>
 <linearGradient id="fold" x1="0" y1="0" x2="0" y2="1"><stop offset="0" stop-color="#a9c9e8"/><stop offset="1" stop-color="#6a9dd0"/></linearGradient>
 <pattern id="mesh" width="2.4" height="2.4" patternUnits="userSpaceOnUse"><rect width="2.4" height="2.4" fill="#3c3c3c"/><path d="M0 0 L2.4 2.4 M2.4 0 L0 2.4" stroke="#c4c4c4" stroke-width=".55"/></pattern>
 <clipPath id="shelfclip"><path d="M35 765 L1245 765 L1264 800 L17 800 Z"/></clipPath>
</defs>
<!-- shelf -->
<clipPath id="clipL"><rect x="0" y="740" width="636" height="60"/></clipPath>
<clipPath id="clipR"><rect x="636" y="740" width="644" height="60"/></clipPath>
<linearGradient id="shL1" x1="0" y1="0" x2="0" y2="1"><stop offset="0" stop-color="#cdcdcd"/><stop offset="1" stop-color="#c1c1c1"/></linearGradient>
<linearGradient id="shL2" x1="0" y1="0" x2="0" y2="1"><stop offset="0" stop-color="#b4b4b4"/><stop offset="1" stop-color="#a8a8a8"/></linearGradient>
<linearGradient id="shLd" x1="0" y1="0" x2="1" y2="0"><stop offset="0" stop-color="#000" stop-opacity=".09"/><stop offset="1" stop-color="#000" stop-opacity="0"/></linearGradient>
<linearGradient id="shR1" x1="0" y1="0" x2="0" y2="1"><stop offset="0" stop-color="#808080"/><stop offset="1" stop-color="#767676"/></linearGradient>
<linearGradient id="shR3" x1="0" y1="0" x2="0" y2="1"><stop offset="0" stop-color="#8a8a8a"/><stop offset="1" stop-color="#9c9c9c"/></linearGradient>
<g clip-path="url(#clipL)">
 <path d="M35 765 L700 765 L700 790 L21.6 790 Z" fill="url(#shL1)"/>
 <path d="M21.6 790 L700 790 L700 797.3 L17.6 797.3 Z" fill="url(#shL2)"/>
 <path d="M35 765 L230 765 L230 797.3 L17.6 797.3 Z" fill="url(#shLd)"/>
 <path d="M25.8 782.2 L164 782.2 L164 783 L25.4 783 Z" fill="#000" opacity=".07"/>
 <path d="M17.6 797.3 L700 797.3 L700 798.2 L17 798.2 Z" fill="#6e6e6e"/>
 <path d="M17 798.2 L700 798.2 L700 800 L16 800 Z" fill="#e6e6e6"/>
</g>
<g clip-path="url(#clipR)">
 <path d="M600 765 L1245 765 L1254.5 782.5 L600 782.5 Z" fill="url(#shR1)"/>
 <path d="M600 782.5 L1254.5 782.5 L1259.3 791.2 L600 791.2 Z" fill="#6c6c6c"/>
 <path d="M600 791.2 L1259.3 791.2 L1262.5 797.3 L600 797.3 Z" fill="url(#shR3)"/>
 <path d="M600 797.3 L1262.5 797.3 L1263 798.2 L600 798.2 Z" fill="#474747"/>
 <path d="M600 798.2 L1263 798.2 L1264 800 L600 800 Z" fill="#cfcfcf"/>
</g>
<g clip-path="url(#shelfclip)" opacity=".27"><use href="#icons" transform="translate(0,1570) scale(1,-1)"/></g>
<g id="icons">
<!-- 1 Finder -->
<g id="d1">
 <rect x="42" y="753" width="31.5" height="26" fill="url(#fdL)"/>
 <path d="M61.5 753 C58 758 55.8 763 55.2 767.2 L60.6 767.2 C60.2 771.5 60.6 775.5 61.6 779 L73.5 779 L73.5 753 Z" fill="url(#fdR)"/>
 <path d="M62.8 749 C58.5 755.5 55.8 762 55.2 767.2 L60.6 767.2 C60.1 772.5 60.8 778 62.6 783" fill="none" stroke="#0a0a0a" stroke-width="1.5" stroke-linecap="round"/>
 <path d="M47.2 771.3 Q58 776.8 68.8 771.3" fill="none" stroke="#0a0a0a" stroke-width="1.3" stroke-linecap="round"/>
 <rect x="49.6" y="757.3" width="1.4" height="3.6" rx=".6" fill="#111"/><rect x="63.6" y="757.3" width="1.4" height="3.6" rx=".6" fill="#111"/>
</g>
<!-- 2 spaceship -->
<g id="d2">
 <path d="M92 756 Q100 750.6 108 752.6 L117.4 755.4 L116.8 757 L108 755 Q101 754 96 759 Z" fill="#4c5256"/>
 <path d="M98 753.6 Q104 752 110 753.6" stroke="#9aa2a6" stroke-width=".8" fill="none"/>
 <path d="M85 752 L90.4 751 L109.6 763.4 L110 767.4 L105 769.4 L86.6 757.6 Z" fill="#464c50"/>
 <ellipse cx="100.6" cy="760.6" rx="7" ry="3.6" transform="rotate(32 100.6 760.6)" fill="#3a4044"/><path d="M88.6 754 L106.6 765.6" stroke="#e4e8ea" stroke-width="1.5"/>
 <path d="M91 758.4 L104 767" stroke="#7c8488" stroke-width="1.6"/>
 <path d="M80.6 749.8 L88.6 754.4" stroke="#1fc9e6" stroke-width="3" stroke-linecap="round"/>
 <path d="M82.6 750.8 L87.4 753.6" stroke="#c2f8ff" stroke-width="1.1" stroke-linecap="round"/>
 <path d="M106 763 L113.4 766 M104 766 L110 769.6" stroke="#5a6064" stroke-width="1.5"/>
 <path d="M98.6 766.4 L111.4 774" stroke="#5e666a" stroke-width="3.2" stroke-linecap="round"/>
 <path d="M99.6 766.4 L110.4 772.8" stroke="#b4bcc0" stroke-width="1"/>
 <path d="M85 769.6 L94.2 779.2" stroke="#60686c" stroke-width="3.4" stroke-linecap="round"/>
 <path d="M85.6 769.4 L93.8 778" stroke="#c0c8cc" stroke-width="1"/>
 <path d="M87.6 760.6 L92.6 763 L90.8 771.6 L86.6 769 Z" fill="#f4f4f4" stroke="#b4b4b4" stroke-width=".4"/>
 <path d="M88.4 766 L90.6 764 L90.4 767.2 Z" fill="#e02828"/>
 <path d="M80.4 785.6 L83.6 782 M81.2 781.2 L84.4 781 L84.2 784.2" stroke="#fff" stroke-width="2.4" fill="none" stroke-linecap="round"/>
 <path d="M80.4 785.6 L83.6 782 M81.2 781.2 L84.4 781 L84.2 784.2" stroke="#111" stroke-width="1.2" fill="none"/>
</g>
<!-- 3 Mail stamp -->
<g id="d3">
 <circle cx="131" cy="771.6" r="9.5" fill="none" stroke="#8c93b8" stroke-opacity=".5" stroke-width=".9"/>
 <g transform="rotate(-9.6 139.7 766.3)">
  <rect x="124.4" y="750.8" width="31" height="32.6" fill="#555" opacity=".28"/><rect x="125.2" y="751" width="29" height="30.6" fill="#fbfbfb" stroke="#fdfdfd" stroke-width="1.6" stroke-dasharray="1.5 1.1"/>
  <rect x="124.7" y="750.5" width="30" height="31.6" fill="none" stroke="#bdbdbd" stroke-width=".5" stroke-dasharray="1.5 1.1"/>
  <rect x="127.8" y="753.6" width="23.8" height="25.4" fill="url(#stampB)"/>
  <rect x="127.8" y="753.6" width="23.8" height="9" fill="#9ab4f2" opacity=".45"/>
 </g>
 <path d="M133.6 756.2 Q135.6 754.8 136.8 757 L139.6 764 Q140.8 766 139 767 Q136.6 766.6 135.4 763.6 Q133.4 759.6 133.6 756.2 Z" fill="#8a8c98"/>
 <path d="M134.2 756.6 Q135.2 755.6 136 757 L137.6 761 Q136 761.6 135 760 Z" fill="#c4c8d4"/>
 <path d="M139.6 764.6 Q145 767 150.4 772.6 Q151 774.6 149 775 Q144.6 774.4 141 771.4 Q139.4 769.4 139.6 764.6 Z" fill="#6a5228"/>
 <path d="M141 767 Q145.6 769.4 149.6 773.4" stroke="#a88846" stroke-width="1" fill="none"/>
 <path d="M138.4 765.6 Q139.6 769 138.6 772.6 Q136 773.6 134 771.6 Q135.6 768.6 138.4 765.6 Z" fill="#8a6a2c"/>
</g>
<!-- 4 Firefox -->
<g id="d4">
 <circle cx="181" cy="766" r="18.2" fill="url(#ffFox)"/>
 <circle cx="182.6" cy="763.2" r="14.4" fill="url(#ffGlobe)"/>
 <path d="M178 751.6 Q181 749.6 184 752 Q182.6 754.6 184.6 756.6 Q181 757.6 178.6 755.6 Q177 753.6 178 751.6 Z M186 757.6 Q190 756 192.6 759 Q194 763.6 191.6 767.6 Q189.6 764 186.6 763 Q184.6 760 186 757.6 Z M183 767.6 Q186.6 767 188.6 769.6 Q187 773.6 183.6 774 Q181.6 770.6 183 767.6 Z" fill="#0e1e66" opacity=".75"/>
 <path d="M176 752 Q182 748.8 188.6 750.6 Q184 751.6 183 754 Q179 754.6 176 752 Z" fill="#a6e2fa" opacity=".7"/>
 <path d="M163.4 760.6 C165 753 170.6 750 175 752.4 C172.6 754.4 173 757 175.2 758.2 C178.6 756.6 182 757.4 184.8 759.6 C181.6 760 180 761.8 181 764.2 C183 766.8 187 766.2 189.8 764.6 C188.8 770.8 182 774.2 176 772.8 C169 771.2 163.6 767 163.4 760.6 Z" fill="#ee6a10"/>
 <path d="M166 757 C167.6 753.6 171 752 173.6 753" stroke="#f9a23a" stroke-width="1.2" fill="none"/>
 <path d="M196.6 754 C201.2 762 200 773 193 779.6 C187 785 178 785.6 171.6 782 C180 782.6 188 779 192 772 C195 766.6 196.2 760 196.6 754 Z" fill="#fbc92c"/>
 <path d="M164 768 C166 776.6 174 782.6 183 782 C175 784.6 166 780.6 163 772 Z" fill="#c63a08" opacity=".55"/>
</g>
<!-- 5 PDA -->
<g id="d5" transform="rotate(-9 221 766)">
 <rect x="207.5" y="749" width="27" height="34.5" rx="3.2" fill="url(#pdaB)" stroke="#8e8e8e" stroke-width=".8"/>
 <rect x="210.3" y="752" width="21.4" height="22.6" fill="url(#pdaS)"/>
 <path d="M212 754 H230 M212 757 H220 M222 757 H230 M212 759.5 H220 M222 759.5 H230 M212 762 H220 M222 762 H230 M212 764.5 H220 M222 764.5 H230 M212 767 H220 M222 767 H230 M212 769.5 H220 M222 769.5 H230" stroke="#cfe4f8" stroke-opacity=".55" stroke-width=".8"/>
 <ellipse cx="221" cy="778.6" rx="7" ry="2.3" fill="#1a1a1a"/>
 <ellipse cx="221" cy="778.4" rx="3" ry="1" fill="#777"/>
</g>
<!-- 6 RSS -->
<g id="d6">
 <rect x="250.6" y="751" width="23.6" height="22" rx="3.5" fill="#4f9a3c"/>
 <rect x="253" y="752.4" width="19" height="3" rx="1.5" fill="#86c46e" opacity=".7"/>
 <rect x="255" y="754.6" width="23.2" height="23.6" rx="3.5" fill="#d6393c"/>
 <rect x="257.4" y="756" width="18.6" height="3" rx="1.5" fill="#f07a78" opacity=".7"/>
 <path d="M270 764 C274 767 275.6 771 275 776" fill="none" stroke="#fff" stroke-width="3"/>
 <rect x="247" y="758.6" width="23.8" height="23.6" rx="3.5" fill="url(#rssB)" stroke="#12307a" stroke-width=".6"/>
 <circle cx="252.8" cy="776.4" r="2.1" fill="#fff"/>
 <path d="M250.8 769.4 C255.6 769.4 259.8 773.4 259.8 778.4" fill="none" stroke="#fff" stroke-width="2.6"/>
 <path d="M250.8 764 C258.8 764 265.2 770.4 265.2 778.4" fill="none" stroke="#fff" stroke-width="2.6"/>
</g>
<!-- 7 iTunes -->
<g id="d7">
 <ellipse cx="303.6" cy="767.4" rx="18.6" ry="17.6" fill="url(#cd)" stroke="#a4a4ac" stroke-width=".7"/>
 <path d="M303.6 767.4 L286 760 A18.6 17.6 0 0 1 296 751.4 Z" fill="#8fe0a0" opacity=".55"/>
 <path d="M303.6 767.4 L290 779.6 A18.6 17.6 0 0 1 285.4 770 Z" fill="#f4d890" opacity=".5"/>
 <path d="M303.6 767.4 L320 776 A18.6 17.6 0 0 1 312 783 Z" fill="#d8a8f0" opacity=".5"/>
 <circle cx="304.6" cy="766.4" r="5.2" fill="#d4d4d8" stroke="#9a9aa2" stroke-width=".6"/>
 <circle cx="304.6" cy="766.4" r="1.7" fill="#f4f4f4" stroke="#888" stroke-width=".4"/>
 <path d="M300.6 752.6 L319.4 748.4 L319.4 773 L316.6 773 L316.6 757.4 L303.4 760.4 L303.4 776 L300.6 776 Z" fill="url(#note)"/>
 <path d="M300.6 752.6 L319.4 748.4 L319.4 754.6 L300.6 758.8 Z" fill="#1550d8"/>
 <ellipse cx="298.6" cy="776.4" rx="4.8" ry="3.7" fill="#1f6ae8" stroke="#0a3cb0" stroke-width=".5"/>
 <ellipse cx="314.8" cy="773.2" rx="4.8" ry="3.7" fill="#1f6ae8" stroke="#0a3cb0" stroke-width=".5"/>
 <ellipse cx="297.8" cy="775.2" rx="2.2" ry="1.2" fill="#8cc4ff" opacity=".8"/><ellipse cx="314" cy="772" rx="2.2" ry="1.2" fill="#8cc4ff" opacity=".8"/>
</g>
<!-- 8 VLC -->
<g id="d8">
 <path d="M332.6 772.6 L356.4 772.6 L361 785 L328 785 Z" fill="url(#vlcO)"/>
 <path d="M328 785 L361 785 L361 786 L328 786 Z" fill="#d86400"/>
 <ellipse cx="344.5" cy="778.6" rx="11" ry="3.4" fill="#e87800"/>
 <path d="M342.4 749.4 Q344.5 747.2 346.6 749.4 L355.4 778 Q344.5 783 333.6 778 Z" fill="url(#vlcO)"/>
 <path d="M340.7 754.8 L348.3 754.8 L350.1 760.6 Q344.5 762.6 338.9 760.6 Z" fill="url(#vlcW)"/>
 <path d="M337 767 L352 767 L354 773.6 Q344.5 776.8 335 773.6 Z" fill="url(#vlcW)"/>
</g>
<!-- 9 Skype -->
<g id="d9">
 <circle cx="377.6" cy="758.4" r="9" fill="url(#sky)"/><circle cx="393.4" cy="775" r="9" fill="#0a9ce8"/>
 <circle cx="385.4" cy="766.6" r="15.4" fill="url(#sky)"/>
 <text x="385.4" y="777.4" text-anchor="middle" font-family="Liberation Sans,DejaVu Sans,sans-serif" font-weight="bold" font-size="30" fill="#fff">S</text>
</g>
<!-- 10 Adium duck -->
<g id="d10">
 <path d="M416.4 760 L418 752.6 L420.6 754.6 L422 749.4 L425 751.6 L427 747.6 L429.4 751.4 L432.4 749.6 L433 754 L436 753 L436.6 760 L437.4 766 L436 770 Q438.6 777 436.4 782 Q427 786.4 417 782 Q414.6 777 417 770 L415.8 766 Z" fill="url(#duck)"/>
 <ellipse cx="426.6" cy="776.4" rx="7" ry="6" fill="#4fb834" opacity=".75"/>
 <path d="M418.4 765.4 Q426.6 761.4 435 765.4 Q433 769.4 426.6 769.2 Q420 769.4 418.4 765.4 Z" fill="#f0a028"/>
 <path d="M419.6 766.4 Q426.6 768.4 433.8 766.4" stroke="#b86a10" stroke-width=".7" fill="none"/>
 <path d="M421.6 757.4 q1.6 -1.6 3.2 0 M428.4 757.4 q1.6 -1.6 3.2 0" stroke="#1a5a10" stroke-width=".9" fill="none"/>
</g>
<!-- 11 pufferfish -->
<g id="d11">
 <path d="M473.6 759.6 L478.6 757.6 L479.6 761.6 L476 762.6 Z" fill="#d8d8d8" stroke="#111" stroke-width=".9"/>
 <path d="M472 771.6 L478.8 773.4 L476.4 777 L470.6 774.6 Z" fill="#efefef" stroke="#111" stroke-width="1"/>
 <path d="M481.6 761.6 L486.8 760.6 L486.8 769.8 L481.6 768.4 Z" fill="#f4f4f4" stroke="#0a0a0a" stroke-width="1.2"/>
 <path d="M448.6 766 C448 758 455 753.6 463 753.8 C471 754 476 759 482.4 762.6 L482.4 767.6 C476 770 472 777.6 462 777.8 C454 778 449 773 448.6 766 Z" fill="url(#fishB)" stroke="#0a0a0a" stroke-width="1.3"/>
 <path d="M448.4 764 C448.4 757 455 753.4 463 753.6 C471 753.8 477 759.4 483 762.6 L483 767 C475 768.2 468 768 462.6 766 C456.6 763.8 452 762.4 448.4 764 Z" fill="#0c0c0c"/>
 <path d="M459 762 Q462 759.6 465 760.4 Q464.6 763.6 461.6 764.6 Q462.6 762.6 459 762 Z" fill="#f4f4f4"/>
 <circle cx="456.4" cy="757.2" r="1.1" fill="#3aa83a"/><circle cx="465" cy="757.4" r=".9" fill="#eee"/><circle cx="468" cy="760.6" r="1" fill="#fff"/><circle cx="466.6" cy="763.6" r=".9" fill="#fff"/><circle cx="471.4" cy="762.8" r=".9" fill="#fff"/>
 <circle cx="460.4" cy="767.2" r=".8" fill="#2a9a2a"/><circle cx="464" cy="768.6" r="1" fill="#28b428"/><circle cx="461" cy="772.2" r="1.1" fill="#22a822"/><circle cx="466" cy="771.4" r="1" fill="#0e6a1e"/><circle cx="469.6" cy="770" r=".9" fill="#58c858"/><circle cx="459.6" cy="769.6" r=".6" fill="#2a9a2a"/>
</g>
<!-- 12 aMule donkey -->
<g id="d12">
 <path d="M504.6 761 L497.6 751.6 Q503 752.6 507.4 759.6 Z" fill="#a85a24" stroke="#6a3410" stroke-width=".5"/>
 <path d="M509.6 760 L512.6 747.2 Q515.6 752 513.8 761 Z" fill="#b86a30" stroke="#6a3410" stroke-width=".5"/>
 <ellipse cx="497.6" cy="782.6" rx="3.4" ry="2.8" fill="#8c8c8c"/><ellipse cx="520.6" cy="782.6" rx="3.4" ry="2.8" fill="#8c8c8c"/>
 <path d="M498 781 Q500 773.6 506 775 L512 775 Q518.4 773.6 520.4 781 Q516 784 512 781.6 Q509 785.4 506 781.6 Q502 784.4 498 781 Z" fill="url(#mule)"/>
 <ellipse cx="509" cy="778" rx="7.4" ry="6.6" fill="url(#mule)"/>
 <ellipse cx="497.8" cy="771.4" rx="2.6" ry="2.2" fill="#8c8c8c"/><ellipse cx="520.2" cy="771.4" rx="2.6" ry="2.2" fill="#8c8c8c"/>
 <path d="M499 771 Q503 771 505 774 M519 771 Q515 771 513 774" stroke="#b86a30" stroke-width="2.6" fill="none"/>
 <ellipse cx="508.6" cy="764.6" rx="7" ry="6.4" fill="url(#mule)"/>
 <ellipse cx="508.6" cy="769.8" rx="6.6" ry="5" fill="#c2c2c2"/>
 <ellipse cx="508.6" cy="770.8" rx="4" ry="3" fill="#8e8e8e"/>
 <circle cx="505.6" cy="763.4" r="1.4" fill="#fff"/><circle cx="511.4" cy="763.4" r="1.4" fill="#fff"/><circle cx="505.8" cy="763.6" r=".6" fill="#111"/><circle cx="511.2" cy="763.6" r=".6" fill="#111"/>
 <path d="M512.4 775.6 L514.6 775 L515 778 L513 778.6 Z" fill="#d82828"/>
</g>
<!-- 13 Transmission -->
<g id="d13">
 <g transform="rotate(-32 551.6 772)">
  <rect x="538.6" y="759.4" width="26" height="25.6" rx="3.6" fill="#8a8a8a" stroke="#6a6a6a" stroke-width=".8"/>
  <rect x="542.4" y="763" width="18.4" height="18.2" rx="1.6" fill="url(#trB)"/>
 </g>
 <path d="M549.6 764 L553.4 773.6 L556 772.6 L553.8 779.6 L546.8 776.6 L549.8 775.2 L546 766 Z" fill="#3c3c3c"/>
 <path d="M537.6 757.8 L555.6 750.6" stroke="#d41414" stroke-width="5.6" stroke-linecap="round"/>
 <path d="M538 756.6 L554.6 750" stroke="#ff7a70" stroke-width="1.3" stroke-linecap="round" opacity=".8"/>
 <path d="M543.6 755.4 L549.8 752.9" stroke="#d8d8d8" stroke-width="6.2"/>
 <path d="M547 757 Q548.4 764 551.6 771" stroke="#c4c4c4" stroke-width="3.2" fill="none"/>
 <path d="M546.4 757 Q547.8 764 551 771" stroke="#f4f4f4" stroke-width="1" fill="none"/>
</g>
<!-- 14 green notebook -->
<g id="d14">
 <g transform="rotate(-11 590 766)">
  <rect x="574.6" y="752.6" width="3" height="29" fill="#d8d8d8"/>
  <rect x="577" y="750.4" width="25.6" height="32.4" rx="1" fill="url(#nbG)" stroke="#388c1e" stroke-width=".7"/>
  <rect x="577.6" y="751" width="24.4" height="2.2" fill="#c8f4a0" opacity=".8"/>
  <path d="M579 757 H600 M579 760 H600 M579 763 H600 M579 766 H600 M579 769 H600 M579 772 H600 M579 775 H600 M579 778 H600" stroke="#d8f8b8" stroke-opacity=".35" stroke-width=".6"/><text x="590.6" y="775.4" text-anchor="middle" font-family="Liberation Serif,DejaVu Serif,serif" font-style="italic" font-size="27" fill="#fff" fill-opacity=".95">C</text>
 </g>
 <path d="M606 765 L595.4 782.6" stroke="#e8862c" stroke-width="2.4"/>
 <path d="M606.8 763.6 L605.4 766" stroke="#f08aa0" stroke-width="2.6"/>
 <path d="M595.8 781.8 L594.4 784.2" stroke="#333" stroke-width="1.2"/>
</g>
<!-- 15 Stickies -->
<g id="d15">
 <rect x="631" y="755.4" width="19" height="17.6" fill="#f2e56c" transform="rotate(3 640 764)"/>
 <rect x="624.4" y="768.6" width="19.6" height="13.4" fill="#f5ea7c" transform="rotate(-3 634 775)"/>
 <path d="M613.8 756 L632.4 750.6 L636.6 767 L618.4 772.4 Z" fill="#f6ec80"/>
 <path d="M620.6 757.6 l2 -.8 l1.2 1 l1.6 -.8 M617.6 763 l3 -1.4 l2 .6 l3 -1.6 l2 .4 l3.4 -1.6" stroke="#3a3420" stroke-width=".8" fill="none"/>
 <path d="M618.4 765 L633 760.4" stroke="#3a3420" stroke-width=".9"/>
 <path d="M636.4 761.6 l1.4 2.4 l1 -2.8 l1.4 2.6 l1.6 -2.4 l1.4 2" stroke="#e02a1a" stroke-width="1" fill="none"/>
 <path d="M629.6 775.6 l2 -1.6 l1 1.6 l2 -1.8 l1.6 1.2" stroke="#2a3a9a" stroke-width=".9" fill="none"/>
</g>
<!-- 16 TextEdit -->
<g id="d16">
 <path d="M654 760.6 L660 759.6 L673 783 L666.6 784.6 Z" fill="#ecd85a"/>
 <g transform="rotate(-12 671 766)">
  <rect x="659" y="749.6" width="24.6" height="32.6" fill="#f6f6fa" stroke="#c8c8d0" stroke-width=".5"/>
  <path d="M661.6 753 H667 M661.6 756 H681 M661.6 758 H681 M661.6 760 H681 M661.6 762 H681 M661.6 764 H681 M661.6 766 H681 M661.6 768 H676 M661.6 772 H668 M661.6 774 H668" stroke="#5a5a62" stroke-opacity=".55" stroke-width=".7"/>
 </g>
 <path d="M690.4 757.4 L679 780" stroke="#8e8e96" stroke-width="3.4" stroke-linecap="round"/>
 <path d="M689.8 757.4 L678.6 779.6" stroke="#e4e4ea" stroke-width="1.3" stroke-linecap="round"/>
 <path d="M679 780 L677.4 784" stroke="#555" stroke-width="1.3"/>
</g>
<!-- 17 ship globe -->
<g id="d17">
 <circle cx="714" cy="766.8" r="16.2" fill="url(#shipG)"/>
 <ellipse cx="713" cy="757" rx="11" ry="5.6" fill="#8aa4ff" opacity=".3"/>
 <path d="M703 768.6 Q702.4 775 707 779.8 Q712.6 782.6 718.8 780 Q721.2 776 720.4 770.4 Q714 774.8 709 772 Q705.6 770 703 768.6 Z" fill="#f3decb"/>
 <path d="M703.4 769.6 Q703.8 775 707 778.8 Q706.2 774 707.8 771.6 Z" fill="#c4765c"/>
 <path d="M710 772.8 Q715 775.2 720.2 771.4 Q720.8 776 718.8 779.8 Q716 778 716.6 775.2 Q712.6 776.2 710 772.8 Z" fill="#86281b"/>
 <path d="M705.6 759.6 Q709.6 757.4 713.8 758.6 Q712 765 713.6 771.6 Q709.6 771.8 706.6 769.6 Q705 764.6 705.6 759.6 Z" fill="#e9dab4"/>
 <path d="M707.6 760.6 V769.4 M709.8 760 V770.6" stroke="#8496d8" stroke-width="1.1"/>
 <path d="M715.4 758.6 Q722 757.8 727.6 765 Q727.8 769 725 771.2 Q722 768 719.6 772 Q717 769.6 715 770.6 Q713.8 764 715.4 758.6 Z" fill="#f6f0e2"/>
 <path d="M716 759 Q720 763 718.4 770.6 M721 759.6 Q726 764 725 770.6" stroke="#b48c3e" stroke-width="1" fill="none"/>
 <path d="M705.6 759.6 Q709.6 757.4 713.8 758.6 M715.4 758.6 Q722 757.8 727.6 765" stroke="#c8a050" stroke-width="1" fill="none"/>
 <path d="M712.6 751.4 Q716.2 750.6 718 756.8 Q715 758.2 712 757 Q711 754 712.6 751.4 Z" fill="#e6d09a"/>
 <path d="M722.4 751 L719 759.6 M714.6 751 L714.4 772" stroke="#2e2114" stroke-width=".9"/>
 <path d="M712 757.6 L723 758.8" stroke="#2e2114" stroke-width="1.3"/>
 <rect x="715" y="749" width="2.6" height="1.5" fill="#e8c428"/><rect x="723" y="749.4" width="2.6" height="1.5" fill="#e8c428"/>
</g>
<!-- 18 Spaces -->
<g id="d18">
 <rect x="737.2" y="751.8" width="35.4" height="30.4" rx="2.6" fill="#161616" stroke="#5a5a5a" stroke-width=".9"/>
 <rect x="739.6" y="754.2" width="14.4" height="11.8" rx="1" fill="url(#spP)"/><rect x="756" y="754.2" width="14.4" height="11.8" rx="1" fill="url(#spP)"/>
 <rect x="739.6" y="768" width="14.4" height="11.8" rx="1" fill="url(#spP)"/><rect x="756" y="768" width="14.4" height="11.8" rx="1" fill="url(#spP)"/>
 <rect x="742" y="756.6" width="8.4" height="6" fill="#f4f4f4"/><rect x="743" y="758" width="5" height="5" fill="#d8d8d8"/>
 <rect x="762" y="757.4" width="6.4" height="3.4" fill="#e8d040"/><rect x="759" y="759.6" width="6" height="3" fill="#58c858"/>
 <rect x="744" y="770.6" width="7" height="4.4" fill="#d82020"/><rect x="742" y="772.6" width="7" height="4.4" fill="#38a838"/>
</g>
<!-- 19 Terminal -->
<g id="d19">
 <rect x="778.2" y="751.4" width="35.6" height="30.8" fill="url(#frame)"/>
 <rect x="781.4" y="754.4" width="29.2" height="24.6" fill="url(#term)"/>
 <text x="782.6" y="762.6" font-family="Liberation Mono,DejaVu Sans Mono,monospace" font-weight="bold" font-size="8.6" fill="#f4f4f4">&gt;_</text>
</g>
<!-- 20 Xcode -->
<g id="d20">
 <path d="M819 757 L852.8 751.6 L855.4 777.6 L822.6 783.4 Z" fill="url(#xcB)"/>
 <path d="M826.6 777.6 L836.4 757.4 L847.6 775 M830.6 769.4 L844 768.4 M841.6 764 L849.4 773.6 M824 765 H834 M824 768 H832" stroke="#dcebfd" stroke-opacity=".8" stroke-width="1" fill="none"/>
 <path d="M826.6 777.6 L836.4 757.4 L838.8 758 L829.6 778.6 Z" fill="#d4e5fc" opacity=".6"/>
 <path d="M834.6 753.4 Q842 749 849 752.6 L855 754.2 L855.8 757.4 L851.4 757.4 Q848 755 845.6 756.6 L844.4 763.6 L840 762.6 L841.6 755 Q838 753.6 834.6 753.4 Z" fill="url(#silver)" stroke="#8a8a8a" stroke-width=".4"/>
 <path d="M840 762.4 L845 763.6 L839.6 784 L833 782.4 Z" fill="#1a1a1a"/>
 <path d="M841.6 763.6 L835.6 782" stroke="#5c5c5c" stroke-width="1.1"/>
</g>
<!-- 21 System Preferences -->
<g id="d21">
 <rect x="860.2" y="751.2" width="35.6" height="31" fill="url(#frame)"/>
 <rect x="862.8" y="753.8" width="30.4" height="25.8" fill="#3c3c3c"/>
 <clipPath id="spc"><rect x="862.8" y="753.8" width="30.4" height="25.8"/></clipPath>
 <g clip-path="url(#spc)">
  <rect x="862.8" y="753.8" width="30.4" height="6" fill="#777" opacity=".6"/>
  <path d="M889.0 768.4 L891.4 769.3 L891.2 770.8 L888.7 771.0 L888.3 772.2 L890.3 773.8 L889.6 775.2 L887.1 774.6 L886.4 775.6 L887.6 777.8 L886.5 778.8 L884.4 777.4 L883.4 778.1 L883.8 780.6 L882.5 781.2 L881.0 779.1 L879.7 779.4 L879.3 781.9 L877.8 782.0 L877.1 779.6 L875.9 779.4 L874.6 781.6 L873.1 781.2 L873.3 778.7 L872.2 778.1 L870.3 779.7 L869.1 778.8 L870.1 776.5 L869.2 775.6 L866.9 776.5 L866.0 775.2 L867.8 773.4 L867.3 772.2 L864.8 772.2 L864.4 770.8 L866.7 769.6 L866.6 768.4 L864.2 767.5 L864.4 766.0 L866.9 765.8 L867.3 764.6 L865.3 763.0 L866.0 761.6 L868.5 762.2 L869.2 761.2 L868.0 759.0 L869.1 758.0 L871.2 759.4 L872.2 758.7 L871.8 756.2 L873.1 755.6 L874.6 757.7 L875.9 757.4 L876.3 754.9 L877.8 754.8 L878.5 757.2 L879.7 757.4 L881.0 755.2 L882.5 755.6 L882.3 758.1 L883.4 758.7 L885.3 757.1 L886.5 758.0 L885.5 760.3 L886.4 761.2 L888.7 760.3 L889.6 761.6 L887.8 763.4 L888.3 764.6 L890.8 764.6 L891.2 766.0 L888.9 767.2 Z" fill="url(#silver)"/>
  <circle cx="877.8" cy="768.4" r="9" fill="#4a4a4a"/>
  <path d="M877.8 768.4 L877.8 758 M877.8 768.4 L869 773.6 M877.8 768.4 L886.6 773.6" stroke="#d4d4d4" stroke-width="3"/>
  <circle cx="877.8" cy="768.4" r="3.8" fill="#c4c4c4" stroke="#f0f0f0" stroke-width=".7"/>
  <circle cx="877.8" cy="768.4" r="1.2" fill="#666"/>
  <path d="M870.4 781.6 L872.0 782.3 L871.7 783.5 L870.0 783.4 L869.6 784.2 L870.4 785.7 L869.5 786.5 L868.2 785.4 L867.4 785.8 L867.2 787.5 L866.0 787.6 L865.5 786.0 L864.6 785.8 L863.5 787.1 L862.5 786.5 L863.0 784.8 L862.4 784.2 L860.8 784.6 L860.3 783.5 L861.7 782.5 L861.6 781.6 L860.0 780.9 L860.3 779.7 L862.0 779.8 L862.4 779.0 L861.6 777.5 L862.5 776.7 L863.8 777.8 L864.6 777.4 L864.8 775.7 L866.0 775.6 L866.5 777.2 L867.4 777.4 L868.5 776.1 L869.5 776.7 L869.0 778.4 L869.6 779.0 L871.2 778.6 L871.7 779.7 L870.3 780.7 Z" fill="#e2e2e2"/><path d="M894.4 781.6 L896.0 782.3 L895.7 783.5 L894.0 783.4 L893.6 784.2 L894.4 785.7 L893.5 786.5 L892.2 785.4 L891.4 785.8 L891.2 787.5 L890.0 787.6 L889.5 786.0 L888.6 785.8 L887.5 787.1 L886.5 786.5 L887.0 784.8 L886.4 784.2 L884.8 784.6 L884.3 783.5 L885.7 782.5 L885.6 781.6 L884.0 780.9 L884.3 779.7 L886.0 779.8 L886.4 779.0 L885.6 777.5 L886.5 776.7 L887.8 777.8 L888.6 777.4 L888.8 775.7 L890.0 775.6 L890.5 777.2 L891.4 777.4 L892.5 776.1 L893.5 776.7 L893.0 778.4 L893.6 779.0 L895.2 778.6 L895.7 779.7 L894.3 780.7 Z" fill="#e2e2e2"/>
  <circle cx="866" cy="781.6" r="2" fill="#444"/><circle cx="890" cy="781.6" r="2" fill="#444"/>
 </g>
 <rect x="860.2" y="779.6" width="35.6" height="2.6" fill="#b0b0b0"/>
</g>
<!-- 22 Keychain -->
<g id="d22">
 <circle cx="918.8" cy="753" r="6.8" fill="none" stroke="#bcbcbc" stroke-width="1.1"/>
 <path d="M923.4 758.6 Q927.6 757.6 928.6 761.6 Q929 765 926.8 766.6 L930.6 777.6 L928.4 779 L924 768 Q921 765 923.4 758.6 Z" fill="#a8a8a8" stroke="#7c7c7c" stroke-width=".4"/>
 <path d="M918.6 757.6 Q923 756.6 924 761.6 Q923.6 765 922.4 766 L922.6 783.4 L920 783.4 L919.6 766.6 Q916.6 763 918.6 757.6 Z" fill="#b8b8b8" stroke="#7c7c7c" stroke-width=".4"/>
 <path d="M909.4 760 Q913.6 756.6 917.4 760 Q919.6 764.6 915.4 768.4 L909.8 782 L907.2 781 L911 768.6 Q906.6 765 909.4 760 Z" fill="url(#silver)" stroke="#8a8a8a" stroke-width=".4"/>
 <ellipse cx="913" cy="762.6" rx="3.4" ry="3" fill="#f4f4f4" opacity=".7"/>
 <circle cx="915.4" cy="759.8" r=".9" fill="#3a3a3a"/>
</g>
<!-- 23 Activity Monitor -->
<g id="d23">
 <rect x="942" y="751.4" width="35.6" height="30.8" fill="url(#frame)"/>
 <rect x="945" y="754.4" width="29.6" height="24.6" fill="#0c2a22"/>
 <path d="M945 758.5 H974.6 M945 762.5 H974.6 M945 766.5 H974.6 M945 770.5 H974.6 M945 774.5 H974.6 M949 754.4 V779 M953 754.4 V779 M957 754.4 V779 M961 754.4 V779 M965 754.4 V779 M969 754.4 V779 M973 754.4 V779" stroke="#1f5a48" stroke-width=".5"/>
 <path d="M950 768.6 L953.6 767.6 L955.4 769.6 L956.8 757 L958.4 773 L960 768.4 L962.6 768.6 L964.4 765.4 L966.6 768.6 L968.4 767.4 L970.4 769.6 L973 768.6" fill="none" stroke="#3ee0b0" stroke-width="1.1"/>
</g>
<!-- 24 devil beaver -->
<g id="d24">
 <path d="M984.6 752.6 Q979.6 762 986.8 770.6 M990.6 755 Q986.6 762 991.6 768.6 M995.6 757.4 Q993 762 996 766.6" fill="none" stroke="#060606" stroke-width="1.9"/>
 <path d="M1001 757.8 L1001 784 M997 759.4 Q996.6 765.4 1001 766 Q1005.4 765.4 1005 759.4" fill="none" stroke="#e2141c" stroke-width="1.4"/>
 <path d="M1006.4 761.6 Q1008 757.6 1012 759.4 Q1017 759 1019 765 Q1016.6 767 1016.8 772.6 Q1014 772 1013.6 767 L1009 761.6 Z" fill="#ea1a2e"/>
 <ellipse cx="1009.6" cy="765.4" rx="4.2" ry="4" fill="#8a4a20"/>
 <circle cx="1010.8" cy="765" r="1.6" fill="#fff"/><circle cx="1011.2" cy="765.2" r=".7" fill="#111"/>
 <ellipse cx="1007.4" cy="768.8" rx="2.8" ry="1.8" fill="#3a3050"/>
 <path d="M1003.6 772.6 Q1008.6 769.6 1012.6 772.6 Q1014.6 778.6 1012 782.6 L1016 781 L1018.4 782.6 L1011 785 L1004.6 784.2 Q1002 778 1003.6 772.6 Z" fill="#8a4a20"/>
 <path d="M1002 772 L1005 774.6" stroke="#8a4a20" stroke-width="1.6"/>
 <ellipse cx="1007.6" cy="777" rx="2.9" ry="4.8" fill="#f0d890"/>
</g>
<!-- 25 octopus -->
<g id="d25">
 <path d="M1031 770 Q1026.4 765 1026.6 758.6 Q1026 754.8 1023.6 756.4" fill="none" stroke="#a22ec8" stroke-width="2.8" stroke-linecap="round"/>
 <path d="M1051 769 Q1057.6 764 1054.4 756 Q1052.4 751.6 1054.8 751" fill="none" stroke="#a22ec8" stroke-width="2.8" stroke-linecap="round"/>
 <path d="M1027 758 Q1027 764 1031 769" fill="none" stroke="#d884f4" stroke-width=".9"/>
 <path d="M1024.6 777 Q1022.8 771.6 1027.6 770.4 Q1034 769 1035.6 762.6 L1047.8 762.6 Q1049.4 768.6 1055 769.6 Q1060.8 770.4 1060.6 775 Q1058 772.6 1055.6 774.6 Q1059.6 778 1057 781 Q1054.6 776.6 1051 777.6 Q1053.6 781.6 1050 783 Q1048.6 778.6 1046 779 Q1046 783.6 1042.6 783.4 Q1043 779 1040.6 778.6 Q1039.6 783.4 1036 782.6 Q1037.4 778.4 1034.6 777.4 Q1033 782 1029.4 780.4 Q1032 776.4 1029 774.8 Q1026 775 1024.6 777 Z" fill="url(#octo)"/>
 <ellipse cx="1041.7" cy="757.4" rx="7.2" ry="8.6" fill="url(#octo)"/>
 <ellipse cx="1040" cy="753" rx="3.6" ry="3" fill="#f2b4ff" opacity=".6"/>
 <ellipse cx="1041" cy="768.6" rx="9" ry="2.6" fill="#e08af8" opacity=".55"/>
 <path d="M1037.6 761.6 l3.2 2 l-3 .4 Z M1045.8 761.6 l-3.2 2 l3 .4 Z" fill="#d6ea52"/>
</g>
<!-- 26 separator -->
<g id="d26" fill="#e8e8e8" fill-opacity=".5">
 <rect x="1070.6" y="768" width="6.4" height="1.4"/><rect x="1070.4" y="770.6" width="6.8" height="1.5"/><rect x="1070.2" y="773.4" width="7.2" height="1.6"/><rect x="1070" y="776.4" width="7.6" height="1.7"/><rect x="1069.6" y="779.6" width="8.4" height="1.9"/><rect x="1069.2" y="783.2" width="9.2" height="2.1"/><rect x="1068.8" y="787.2" width="10" height="2.3"/><rect x="1068.2" y="791.6" width="11.2" height="2.8"/>
</g>
<!-- 27 folder -->
<g id="d27">
 <path d="M1086 757 L1088 753.2 Q1088.4 752.6 1089.4 752.6 L1099.4 752.6 Q1100.4 752.6 1100.8 753.4 L1102 756 L1121 756 Q1122.8 756 1122.8 758 L1122 780 Q1122 781.2 1120.6 781.2 L1086 781.2 Q1084.8 781.2 1084.8 780 L1084.2 759 Q1084.2 757 1086 757 Z" fill="url(#fold)" stroke="#5a8cc0" stroke-width=".5"/>
 <path d="M1084.6 758.4 L1122.6 757.4" stroke="#c8e0f4" stroke-width=".9"/>
</g>
<!-- 28 mini window octopus -->
<g id="d28">
 <rect x="1126.6" y="759" width="36.4" height="15.2" fill="#ececec" stroke="#8a8a8a" stroke-width=".4"/>
 <rect x="1126.6" y="759" width="36.4" height="1.6" fill="#c4c4c4"/>
 <circle cx="1127.8" cy="759.8" r=".6" fill="#e85a30"/>
 <path d="M1129 767.4 Q1129.6 763 1132 763.6 Q1134.6 763 1135 767.4 Q1132 769.6 1129 767.4 Z" fill="#a634cc"/>
 <rect x="1137" y="765" width="14" height="1.8" fill="#fafafa" stroke="#b0b0b0" stroke-width=".3"/><rect x="1152.6" y="765" width="8" height="1.6" fill="#d8d8d8"/>
 <rect x="1148.6" y="770" width="11.6" height="2.4" rx="1.2" fill="#4a8cf0"/><rect x="1130" y="771.6" width="3.6" height="1" fill="#aaa"/>
 <path d="M1150.6 775 Q1151.6 778 1153 778.6 Q1150 781.6 1150.6 784 Q1153 783 1154 784.6 Q1155.6 783 1157 784.6 Q1158.6 783 1161 784 Q1162 781 1159.6 778.6 Q1161.6 778 1162.6 775 Q1160 776 1159 777 Q1158.6 772.6 1156.4 772.6 Q1154 772.6 1153.6 777 Q1152.6 776 1150.6 775 Z" fill="url(#octo)"/>
</g>
<!-- 29 mini window firefox -->
<g id="d29">
 <rect x="1167.6" y="756.2" width="36.4" height="20.8" fill="#fdfdfd" stroke="#9a9a9a" stroke-width=".4"/>
 <rect x="1167.6" y="756.2" width="36.4" height="1.8" fill="#d4d4d4"/>
 <path d="M1170.6 763.6 l.8 -3.4 l.8 2 l1 -2.2 l.6 3.6 q1 2 -.2 2.6 l-2.6 0 q-1.4 -1 -.4 -2.6 Z" fill="#a8622c"/>
 <circle cx="1197" cy="778.4" r="7" fill="url(#ffFox)"/><circle cx="1198" cy="777" r="5" fill="url(#ffGlobe)"/>
 <path d="M1190.6 775.6 Q1191 773 1192 772.6 Q1192.4 774 1193.4 774.4 Q1195 773.6 1196.6 774 Q1195.6 775 1196 776 L1197.6 776.4 Q1196.6 777.6 1195 778 Q1195 780 1197.4 780 Q1199.4 779.6 1200.2 778.4 Q1200 781.6 1196.6 781.6 Q1191.6 781 1190.6 775.6 Z" fill="#ef6c12"/>
</g>
<!-- 30 trash -->
<g id="d30">
 <path d="M1211.6 755.6 L1243 755.6 L1238.4 784 Q1227 787.6 1216 784 Z" fill="url(#mesh)"/>
 <path d="M1211.6 755.6 L1243 755.6 L1238.4 784 Q1227 787.6 1216 784 Z" fill="#000" opacity=".12"/>
 <ellipse cx="1227.2" cy="755" rx="15.8" ry="5.6" fill="#141414"/>
 <path d="M1215.6 757 Q1216.6 752 1221 752.6 Q1223.6 749.6 1227.6 751.6 Q1231 749.6 1234 752 Q1238.6 753 1237.4 758 Q1232 760.6 1226 759.6 Q1219 760 1215.6 757 Z" fill="#f2f2f2"/>
 <path d="M1221 753 Q1224 755.6 1227.6 751.6 Q1229 755 1234 752" fill="none" stroke="#c4c4c4" stroke-width=".6"/>
 <path d="M1211.4 755 A15.8 5.6 0 0 0 1243 755" fill="none" stroke="#e4e4e4" stroke-width="1.5"/>
 <path d="M1211.4 755 A15.8 5.6 0 0 1 1243 755" fill="none" stroke="#b8b8b8" stroke-width="1.1"/>
 <path d="M1216 782.6 Q1227 787.4 1238.4 782.6 L1238.2 784.6 Q1227 789 1216.2 784.6 Z" fill="#c8c8d8"/>
</g>
</g>
<ellipse cx="57" cy="792" rx="7.5" ry="3.8" fill="url(#glow)"/><ellipse cx="57" cy="792" rx="3" ry="1.3" fill="#fff"/><ellipse cx="57" cy="800.3" rx="6.5" ry="3" fill="url(#glow)"/>
<ellipse cx="180.6" cy="792" rx="7.5" ry="3.8" fill="url(#glow)"/><ellipse cx="180.6" cy="792" rx="3" ry="1.3" fill="#fff"/><ellipse cx="180.6" cy="800.3" rx="6.5" ry="3" fill="url(#glow)"/>
<ellipse cx="508.6" cy="792" rx="7.5" ry="3.8" fill="url(#glow)"/><ellipse cx="508.6" cy="792" rx="3" ry="1.3" fill="#fff"/><ellipse cx="508.6" cy="800.3" rx="6.5" ry="3" fill="url(#glow)"/>
<ellipse cx="1041" cy="792" rx="7.5" ry="3.8" fill="url(#glow)"/><ellipse cx="1041" cy="792" rx="3" ry="1.3" fill="#fff"/><ellipse cx="1041" cy="800.3" rx="6.5" ry="3" fill="url(#glow)"/>
</svg><!--/DOCK-->

</body>
</html>
